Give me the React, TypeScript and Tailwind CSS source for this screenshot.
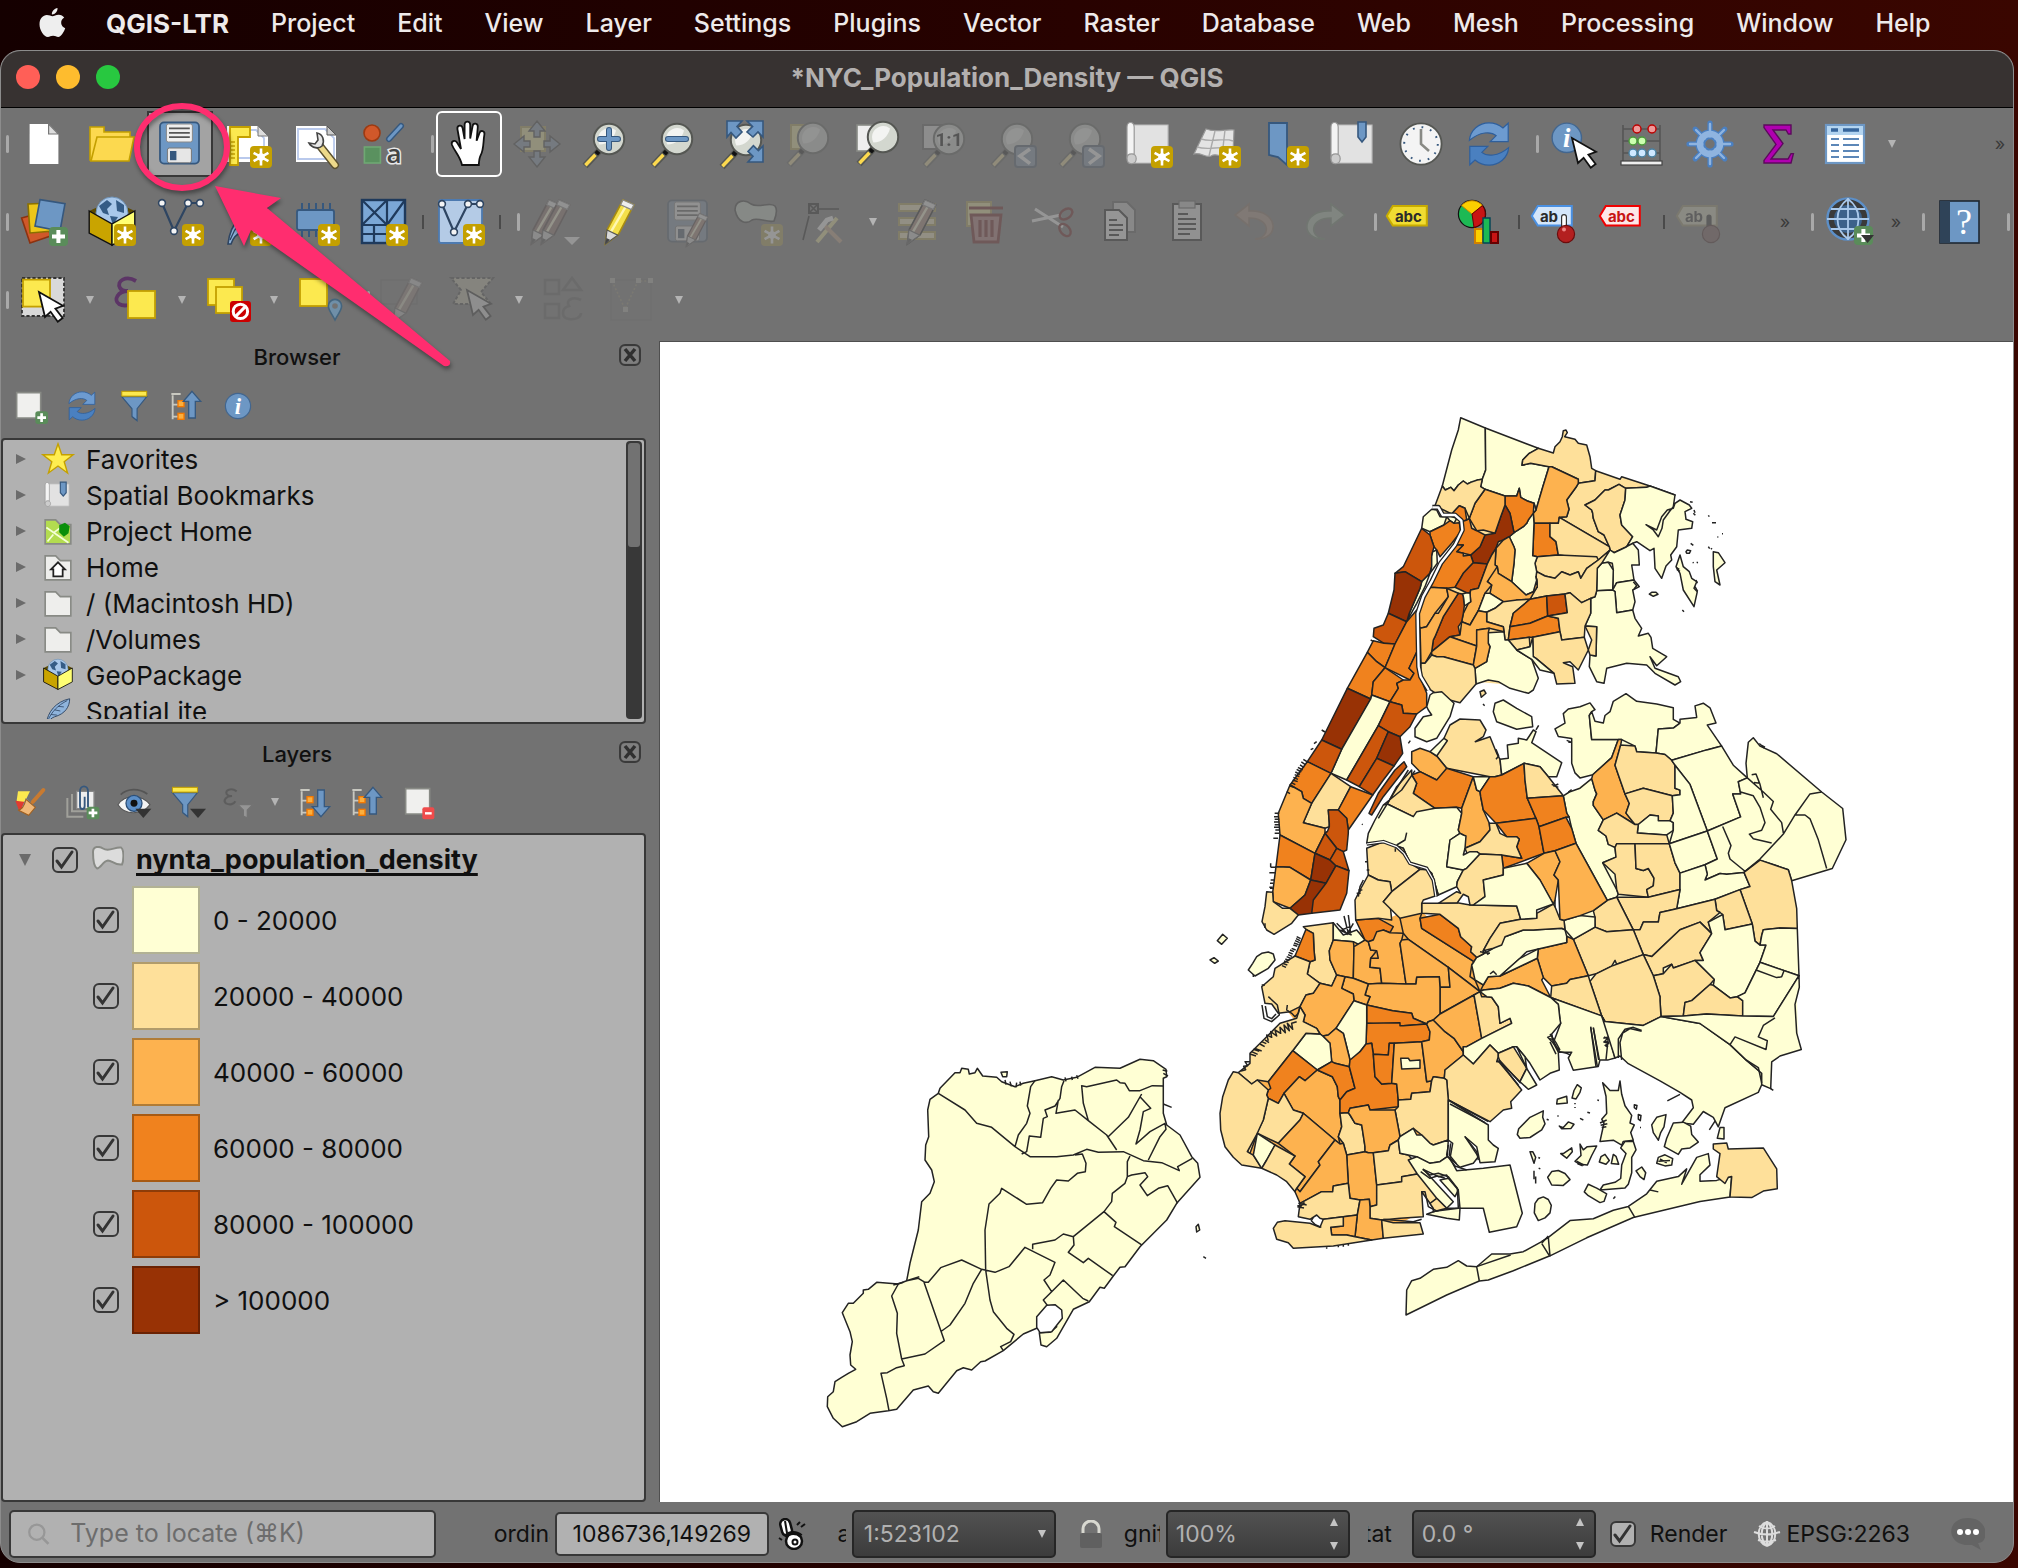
import React from "react";

type Kids = { children?: React.ReactNode };

/* ---------- shared icon pieces ---------- */

function Ico({ children, dim, size = "lg" }: Kids & { dim?: boolean; size?: "lg" | "sm" }) {
  return (
    <svg
      viewBox="0 0 24 24"
      aria-hidden="true"
      className={(size === "lg" ? "h-12 w-12" : "h-8 w-8") + " shrink-0 overflow-visible" + (dim ? " opacity-25 saturate-50" : "")}
      fill="none"
    >
      {children}
    </svg>
  );
}

const Star = () => (
  <g>
    <rect x="13" y="13" width="11" height="11" rx="2" fill="#c4a000" />
    <path d="M18.500 14.200v8.600M14.800 16.400l7.400 4.200M22.200 16.400l-7.400 4.200" stroke="#fff" strokeWidth="1.300" />
    <circle cx="18.500" cy="18.500" r="1.900" fill="#fff" />
  </g>
);

const PlusBadge = () => (
  <g>
    <rect x="14.500" y="14.500" width="9.500" height="9.500" rx="2" fill="#5a8c5a" />
    <path d="M19.200 16v6.500M16 19.200h6.500" stroke="#fff" strokeWidth="2" />
  </g>
);

const Glass = ({ x = 14, y = 9.5 }: { x?: number; y?: number }) => (
  <g transform={`translate(${x - 14} ${y - 9.5})`}>
    <path d="M9 15.500L2 23" stroke="#555753" strokeWidth="3.400" />
    <path d="M7.200 17.400L2.200 22.600" stroke="#fcd94f" strokeWidth="1.700" />
    <path d="M9.400 15L7.600 17" stroke="#111" strokeWidth="2.400" />
    <circle cx="14" cy="9.500" r="7.600" fill="#d3d7cf" stroke="#555753" strokeWidth="1" />
    <path d="M8.500 9.500a5.600 5.600 0 0 1 9-4.300c-1 4-4 7-8.300 7a6 6 0 0 1-.7-2.700z" fill="#f3f4f2" />
  </g>
);

const Cursor = ({ x = 12, y = 9 }: { x?: number; y?: number }) => (
  <path
    transform={`translate(${x} ${y})`}
    d="M0 0l3 12.500 2.800-2.600 3.600 5 2.400-1.900-3.600-4.700 3.800-1.400z"
    fill="#fff"
    stroke="#111"
    strokeWidth="0.900"
  />
);

const Pencil = ({ body = "#f4e04a", edge = "#a88c10" }: { body?: string; edge?: string }) => (
  <g>
    <path d="M15 1l5.400 2.400-7.800 15L6.200 23l.8-7z" fill={body} stroke={edge} strokeWidth="0.800" />
    <path d="M17 3.200L8.600 17.600" stroke="#fff7b0" strokeWidth="1.200" />
    <path d="M15 1l5.400 2.400-1.200 2.400-5.400-2.400z" fill="#eee" stroke="#888" strokeWidth="0.600" />
    <path d="M7 16l5.400 2.600L6.200 23z" fill="#d8d8d8" stroke="#555" strokeWidth="0.600" />
    <path d="M6.700 20l1.800.9L6.200 23z" fill="#444" />
  </g>
);

const Floppy = () => (
  <g>
    <rect x="2" y="1.200" width="19.500" height="20.600" rx="2" fill="#6d97c4" stroke="#36587e" strokeWidth="0.900" />
    <rect x="5.200" y="2" width="13" height="9" rx="1" fill="#eee" stroke="#888" strokeWidth="0.500" />
    <path d="M6.500 4.200h10.400M6.500 6.400h10.400M6.500 8.600h10.400" stroke="#555" strokeWidth="0.900" />
    <rect x="5.700" y="14" width="12" height="7.400" rx="1" fill="#e6e6e6" stroke="#777" strokeWidth="0.500" />
    <rect x="7" y="15.500" width="3.200" height="4.600" fill="#36587e" />
  </g>
);

const Refresh = () => (
  <g stroke="#2f5f9c" strokeWidth="0.600">
    <path d="M2.200 10.200C2.600 5 7 1.400 12 1.400c2.800 0 5 .9 7 2.600l2.600-2.400v9.200h-9l3-3C13 5.600 7.500 5.700 2.200 10.200z" fill="#6d9bd0" />
    <path d="M21.800 13.800C21.400 19 17 22.600 12 22.600c-2.800 0-5-.9-7-2.600l-2.600 2.400v-9.200h9l-3 3c2.600 2.200 8.100 2.100 13.400-2.400z" fill="#4a80c0" />
  </g>
);

const Scroll = () => (
  <g>
    <path d="M4 2.500h17.500v19H4z" fill="#e2e2e2" stroke="#bbb" strokeWidth="0.600" />
    <path d="M1 3.500c0-3 3.400-3 3.600 0v13.600H3c-1.300 0-2 1-2 2.200z" fill="#f4f4f4" stroke="#999" strokeWidth="0.600" />
    <path d="M1 19.400c.1 3.400 4.600 3.200 4.600 0 0-1.400-.9-2.400-2.300-2.400S1 18 1 19.400z" fill="#ccc" stroke="#999" strokeWidth="0.600" />
  </g>
);

const Globe = () => (
  <g>
    <circle cx="12" cy="7.500" r="8" fill="#a9c8ea" stroke="#6f93b8" strokeWidth="0.500" />
    <path d="M5.500 4l4-3 2.500 2-2.500 2.500 1 3-3-1zM14 1l4 2.500v4l-3.500-1zM11 9l4 .5-2.500 4z" fill="#355c86" />
  </g>
);

const Box = () => (
  <g>
    <path d="M.6 6.500L6 4v7z" fill="#5c4a00" />
    <path d="M23.400 6.500L18 4v7z" fill="#5c4a00" />
    <Globe />
    <path d="M.6 6.500L12 13v10.500L.6 17.500z" fill="#c9a400" stroke="#111" strokeWidth="0.700" />
    <path d="M23.400 6.500L12 13v10.500l11.400-6z" fill="#ffff73" stroke="#111" strokeWidth="0.700" />
  </g>
);

const VLine = () => (
  <g>
    <path d="M3 2.500L9 16.500 16 2.500h6" stroke="#2e4562" strokeWidth="1.100" />
    {[[3, 2.5], [9, 16.5], [16, 2.5], [22, 2.5]].map(([a, b]) => (
      <circle key={a} cx={a} cy={b} r="1.700" fill="#f4f4f4" stroke="#2e4562" strokeWidth="0.800" />
    ))}
  </g>
);

const Sq = ({ x, y, s = 13.5 }: { x: number; y: number; s?: number }) => (
  <rect x={x} y={y} width={s} height={s} fill="#fce94f" stroke="#c4a000" strokeWidth="0.900" />
);

const Tag = ({ fill, edge, word, ink = "#2b2b2b" }: { fill: string; edge: string; word: string; ink?: string }) => (
  <g>
    <path d="M-.6 9L2.400 4h17v9.800h-17z" fill={fill} stroke={edge} strokeWidth="1" />
    <text x={word === "ab" ? 8 : 10.2} y="11.800" textAnchor="middle" fontFamily="Inter, sans-serif" fontWeight="700" fontSize="7.500" fill={ink}>
      {word}
    </text>
  </g>
);

const Feather = () => (
  <g>
    <path d="M2 23C3 13 10 4 22 1.500c0 7-4 13-13 15.500-3 1-4.500 3-5.500 6z" fill="#8fb4dc" stroke="#2e4562" strokeWidth="0.800" />
    <path d="M3 21C6 13 12 7 20 3M9 11l5 1M12 8l5 .5M6 15l5 .5" stroke="#2e4562" strokeWidth="0.700" />
  </g>
);

const Funnel = () => (
  <g>
    <path d="M1 5h22l-8.500 9v9L10 20v-6z" fill="#6d97c4" stroke="#36587e" strokeWidth="1" />
    <rect x="1" y="1" width="22" height="3.600" fill="#fce94f" stroke="#c4a000" strokeWidth="0.800" />
  </g>
);

const TreeArrow = ({ up }: { up?: boolean }) => (
  <g>
    <path d="M1 3h7M2 4v18M2 11h5M2 20h5" stroke="#c8c8c0" strokeWidth="1.400" />
    <rect x="6" y="8" width="4.500" height="4.500" fill="#fcaf3e" stroke="#f57900" />
    <rect x="6" y="17.500" width="4.500" height="4.500" fill="#fcaf3e" stroke="#f57900" />
    <path
      d={up ? "M16.500 1l6.500 7.500h-4V21h-5V8.500h-4z" : "M16.500 23l6.500-7.500h-4V3h-5v12.500h-4z"}
      fill="#6d97c4"
      stroke="#36587e"
      strokeWidth="1"
    />
  </g>
);

const Info = () => (
  <g>
    <circle cx="12" cy="12" r="10.500" fill="#6d97c4" stroke="#42668f" strokeWidth="1" />
    <text x="12" y="18.500" textAnchor="middle" fontFamily="Liberation Serif, serif" fontStyle="italic" fontWeight="700" fontSize="19" fill="#fff">
      i
    </text>
  </g>
);

const SheetIcon = ({ children }: Kids) => (
  <g>
    <path d="M2 2h18v19H2z" fill="#f0f0ee" stroke="#888a85" strokeWidth="1.200" />
    {children}
  </g>
);

const FolderShape = ({ fill = "#eeeeec" }: { fill?: string }) => (
  <path d="M1 2.500h9l4 4h9V23H1z" fill={fill} stroke="#888a85" strokeWidth="1.400" />
);

/* ---------- toolbar parts ---------- */

function Tool({ label, children, state }: Kids & { label: string; state?: "save" | "active" }) {
  const skin =
    state === "save"
      ? " border-2 border-[#383838] bg-[#a3a3a3]"
      : state === "active"
        ? " rounded-md border-2 border-white"
        : "";
  return (
    <span className="flex h-[68px] w-[68px] shrink-0 items-center justify-center">
      <button type="button" aria-label={label} className={"flex h-[66px] w-[66px] items-center justify-center" + skin}>
        {children}
      </button>
    </span>
  );
}

const Handle = ({ first }: { first?: boolean }) => (
  <span className={"flex h-[68px] shrink-0 items-center justify-end pr-px " + (first ? "w-[9px]" : "w-[17px]")}>
    <span className="h-[18px] w-[3px] rounded-sm bg-[#a9a9a9]" />
  </span>
);

const Sep = () => (
  <span className="flex h-[68px] w-[9px] shrink-0 items-center justify-center">
    <span className="h-[14px] w-[2px] bg-[#4a4a4a]" />
  </span>
);

const Caret = () => (
  <button type="button" aria-label="More options" className="flex h-[68px] w-6 shrink-0 items-center justify-center">
    <svg viewBox="0 0 8 8" className="h-2 w-2" aria-hidden="true">
      <path d="M0 0h8L4 8z" fill="#b4b4b4" />
    </svg>
  </button>
);

const More = () => (
  <button type="button" aria-label="More tools" className="flex h-[68px] w-[26px] shrink-0 items-center justify-center text-lg text-[#3a3a3a]">
    »
  </button>
);

const MENUS = ["Project", "Edit", "View", "Layer", "Settings", "Plugins", "Vector", "Raster", "Database", "Web", "Mesh", "Processing", "Window", "Help"];

function MenuBar() {
  return (
    <nav className="flex h-[50px] items-center gap-[42px] pb-[3px] pl-[38px] text-[25px] font-medium whitespace-nowrap text-[#eeeaea]">
      <button type="button" aria-label="Apple menu" className="h-8 w-[26px]">
        <svg viewBox="0 0 27 32" className="h-8 w-[28px]" aria-hidden="true">
          <path
            d="M14 8.200c1.600 0 3.400-1.500 6.200-1.500 2.300.1 4.300 1.200 5.500 2.900-4.500 2.600-3.800 8.900 1 10.700-1 3-4 8.700-6.900 8.700-2 0-2.700-1.200-5.200-1.200s-3.400 1.200-5.200 1.200C5.300 29 1 22 1 16.200 1 10.500 4.600 7 8.300 7c2.500 0 4.300 1.200 5.700 1.200zM19 0c.3 3.500-2.600 6.700-5.600 6.500C13 3.500 15.900.3 19 0z"
            fill="#eee"
          />
        </svg>
      </button>
      <button type="button" className="text-[26px] font-bold">QGIS-LTR</button>
      {MENUS.map((m) => (
        <button type="button" key={m}>{m}</button>
      ))}
    </nav>
  );
}

function TitleBar() {
  return (
    <header className="grid h-[57px] grid-cols-[1fr_auto_1fr] items-center rounded-t-[20px] border-b border-black bg-[#373231] px-[15px] pb-1">
      <div className="flex gap-4">
        <button type="button" aria-label="Close" className="h-6 w-6 rounded-full bg-[#ff5f57]" />
        <button type="button" aria-label="Minimize" className="h-6 w-6 rounded-full bg-[#febc2e]" />
        <button type="button" aria-label="Zoom" className="h-6 w-6 rounded-full bg-[#28c840]" />
      </div>
      <h1 className="text-[26px] font-bold text-[#b3b0af]">*NYC_Population_Density — QGIS</h1>
    </header>
  );
}

function Toolbars() {
  return (
    <div className="overflow-hidden">
      <div className="flex h-[75px] items-center pb-1">
        <Handle first />
        <Tool label="New project"><Ico><path d="M4.800 2h9.500l4.900 5v15H4.800z" fill="#fff" /><path d="M14.300 2v5h4.900z" fill="#ddd" stroke="#777" strokeWidth="0.600" /></Ico></Tool>
        <Tool label="Open project">
          <Ico>
            <path d="M1 3.500h7v2.500h13v4H6L3.500 20H1z" fill="#fcd94f" stroke="#c4a000" strokeWidth="0.800" />
            <path d="M4.500 8.500H23L20.500 20.500h-19z" fill="#fcd94f" stroke="#c4a000" strokeWidth="0.800" />
          </Ico>
        </Tool>
        <Tool label="Save project" state="save"><Ico><Floppy /></Ico></Tool>
        <Tool label="New print layout">
          <Ico>
            <path d="M1.500 3H17l5 5v13H1.500z" fill="#fff" /><path d="M4 5h12l4 4v10H4z" stroke="#b9c9ec" strokeWidth="0.900" />
            <path d="M17 3v5h5z" fill="#ddd" stroke="#777" strokeWidth="0.500" />
            <path d="M3 3.500h10v5H7v14H3z" fill="#fce94f" stroke="#c4a000" strokeWidth="0.900" />
            <path d="M3.500 11h2M3.500 13h2M3.500 15h2M3.500 17h2M3.500 19h2" stroke="#c4a000" strokeWidth="0.800" />
            <Star />
          </Ico>
        </Tool>
        <Tool label="Layout manager">
          <Ico>
            <path d="M2 3h15.500L22 7.500V21H2z" fill="#fff" /><path d="M3 4.500h13.500L21 9v10.500H3z" stroke="#b9c9ec" strokeWidth="0.900" />
            <path d="M17.500 3v4.500H22z" fill="#ccc" stroke="#555" strokeWidth="0.500" />
            <path d="M14 13l7.500 9.500" stroke="#5a5030" strokeWidth="4" strokeLinecap="round" />
            <path d="M14 13l7.500 9.500" stroke="#edd98a" strokeWidth="2.600" strokeLinecap="round" />
            <path d="M12.500 6.500c3 .5 4 4 2.500 6.500-1.500 1.500-5 1.200-6.500-1.500l3 .5 1.500-2z" fill="#e8e8e8" stroke="#444" strokeWidth="0.800" />
          </Ico>
        </Tool>
        <Tool label="Style manager">
          <Ico>
            <circle cx="6" cy="6.500" r="4" fill="#d0582a" stroke="#9c3a12" strokeWidth="0.800" />
            <path d="M14.500 9.500L20.500 3" stroke="#36587e" strokeWidth="3" strokeLinecap="round" /><path d="M14.500 9.500L20.500 3" stroke="#6d97c4" strokeWidth="1.600" strokeLinecap="round" />
            <rect x="2.200" y="13.500" width="8" height="8" fill="#5a915f" stroke="#6fa873" strokeWidth="0.800" />
            <text x="17" y="21.500" textAnchor="middle" fontFamily="Open Sans, sans-serif" fontWeight="600" fontSize="13" fill="#444" stroke="#e8e8e8" strokeWidth="1.500" paintOrder="stroke">a</text>
          </Ico>
        </Tool>
        <Handle />
        <Tool label="Pan map" state="active">
          <Ico>
            <path
              d="M8.500 22.500C7.500 18 5 16 3.500 12.500 2.800 10.500 5 9.700 6 11.300L8 14.500 6.200 4.500C6 2.600 8.400 2.200 8.800 4l1 5.500V2.300c0-2 2.700-2 2.800 0v7L13.800 3c.3-1.800 2.700-1.400 2.600.4l-.6 7 1.500-4c.6-1.600 2.700-.9 2.400.8-.7 4-.2 7.500-1.900 10.500-.7 1.300-.8 3-.9 4.800z"
              fill="#fff" stroke="#111" strokeWidth="0.900"
            />
          </Ico>
        </Tool>
        <Tool label="Pan map to selection">
          <Ico dim><rect x="4" y="3.500" width="12" height="12" fill="#fce94f" stroke="#c4a000" /><path d="M12 .5l4 5h-2.500v3h-3v-3H8zM12 23.500l4-5h-2.500v-3h-3v3H8zM.5 12l5-4v2.500h3v3h-3V16zM23.500 12l-5-4v2.500h-3v3h3V16z" fill="#6d97c4" stroke="#333" strokeWidth="0.700" /></Ico>
        </Tool>
        <Tool label="Zoom in"><Ico><Glass /><path d="M14 5v9M9.500 9.500h9" stroke="#36587e" strokeWidth="3" strokeLinecap="round" /><path d="M14 5v9M9.500 9.500h9" stroke="#6d97c4" strokeWidth="2" strokeLinecap="round" /></Ico></Tool>
        <Tool label="Zoom out"><Ico><Glass /><path d="M9.500 9.500h9" stroke="#36587e" strokeWidth="3" strokeLinecap="round" /><path d="M9.500 9.500h9" stroke="#6d97c4" strokeWidth="2" strokeLinecap="round" /></Ico></Tool>
        <Tool label="Zoom full">
          <Ico><Glass x={14.5} y={10} /><path d="M5 .5h7.500L10 3.200 12.500 6l-3 3L7 6.200 5 8.500zM23 .5v8L20.500 6 18 8.500 15 6l2.800-2.800L15 .5zM23 21v-8l-2.300 2.300-2.500-2.500-2.700 2.900 2.500 2.500L15.500 21z" fill="#6d97c4" stroke="#36587e" strokeWidth="0.800" /></Ico>
        </Tool>
        <Tool label="Zoom to selection"><Ico dim><rect x="3" y="2.500" width="11" height="12" fill="#fce94f" stroke="#c4a000" /><Glass y={9} /></Ico></Tool>
        <Tool label="Zoom to layer"><Ico><rect x="2" y="2.500" width="11" height="13" fill="#eee" stroke="#888a85" strokeWidth="0.800" /><Glass x={15} y={8.5} /></Ico></Tool>
        <Tool label="Zoom to native resolution">
          <Ico dim><rect x="1" y="2.500" width="11" height="12" fill="#ddd" stroke="#555" /><Glass /><text x="14" y="13" textAnchor="middle" fontFamily="Roboto, sans-serif" fontWeight="700" fontSize="9.500" fill="#000">1:1</text></Ico>
        </Tool>
        <Tool label="Zoom last"><Ico dim><Glass /><rect x="13" y="13" width="10.500" height="10.500" rx="1.500" fill="#6d97c4" stroke="#36587e" /><path d="M20.500 14.500L15.500 18l5 3.800" stroke="#fff" strokeWidth="1.800" /></Ico></Tool>
        <Tool label="Zoom next"><Ico dim><Glass /><rect x="13" y="13" width="10.500" height="10.500" rx="1.500" fill="#6d97c4" stroke="#36587e" /><path d="M16 14.500L21 18l-5 3.800" stroke="#fff" strokeWidth="1.800" /></Ico></Tool>
        <Tool label="New map view"><Ico><Scroll /><Star /></Ico></Tool>
        <Tool label="New 3D map view">
          <Ico><path d="M.5 17L6.500 4.500c5 2 9 0 14 .5l-.5 12c-5 3-8-1-11 1-3 1-5-2-8.500-1z" fill="#e4e4e4" stroke="#999" strokeWidth="0.600" /><path d="M4 9.500c6 2 11-1 16 1M2 13.500c6 2 12-1 18 1M11 5.500L8 18M16 5L14.500 18" stroke="#aaa" strokeWidth="0.700" /><Star /></Ico>
        </Tool>
        <Tool label="New bookmark"><Ico><path d="M4 1.500h9v21l-4.500-4L4 17.500z" fill="#6d97c4" stroke="#36587e" strokeWidth="0.900" /><Star /></Ico></Tool>
        <Tool label="Show bookmarks"><Ico><Scroll /><path d="M14.500 1h4v7.500l-2 2.500-2-2.500z" fill="#6d97c4" stroke="#36587e" strokeWidth="0.800" /></Ico></Tool>
        <Tool label="Temporal controller">
          <Ico><circle cx="12" cy="12" r="10.300" fill="#f4f4f4" stroke="#555753" strokeWidth="0.900" /><circle cx="12" cy="12" r="8.400" stroke="#36587e" strokeWidth="1" strokeDasharray="0.900 3.500" /><path d="M12 4.500V12l4 3.500" stroke="#888a85" strokeWidth="1.300" /></Ico>
        </Tool>
        <Tool label="Refresh"><Ico><Refresh /></Ico></Tool>
        <Handle />
        <Tool label="Identify features"><Ico><g transform="translate(0 .5) scale(.7)"><Info /></g><Cursor x={11} y={9} /></Ico></Tool>
        <Tool label="Open field calculator">
          <Ico>
            <path d="M2.500 2.500V21M21 2.500V21M2.500 4.500H21M2.500 10.500H21M2.500 16.500H21" stroke="#555" strokeWidth="0.800" />
            {[[9.5, 4.5, "#ef9a9a", "#b00"], [17, 4.5, "#ef9a9a", "#b00"], [7.5, 10.5, "#ccffb0", "#4a9a3a"], [12, 10.5, "#ccffb0", "#4a9a3a"], [7.5, 16.5, "#cfe8ff", "#4a80a0"], [12, 16.5, "#cfe8ff", "#4a80a0"], [17, 16.5, "#cfe8ff", "#4a80a0"]].map(([a, b, f, s]) => (
              <circle key={`${a}-${b}`} cx={a} cy={b} r="2" fill={f as string} stroke={s as string} strokeWidth="0.700" />
            ))}
            <rect x="1.500" y="20.500" width="20.500" height="2" fill="#eee" stroke="#444" strokeWidth="0.600" />
          </Ico>
        </Tool>
        <Tool label="Toolbox">
          <Ico>
            <circle cx="12" cy="12" r="5" stroke="#4a7fc0" strokeWidth="4.600" /><path d="M12 1.500v21M1.500 12h21M4.600 4.600l14.800 14.800M19.400 4.600L4.600 19.400" stroke="#4a7fc0" strokeWidth="2.600" strokeLinecap="round" />
            <path d="M12 2v20M2 12h20M5 5l14 14M19 5L5 19" stroke="#8fb4e0" strokeWidth="1.200" strokeLinecap="round" /><circle cx="12" cy="12" r="5" stroke="#8fb4e0" strokeWidth="3.200" /><circle cx="12" cy="12" r="2.800" fill="#727272" stroke="#4a7fc0" strokeWidth="0.900" />
          </Ico>
        </Tool>
        <Tool label="Statistical summary"><Ico><path d="M5 2.500h13.500v4.500h-1.300L16 5H9.500l5 6.800-6 7.700H17l1.500-2.700h1.200L18.500 21.500H5v-1.300l6-8-6-8.400z" fill="#b000b0" stroke="#5c0a5c" strokeWidth="0.700" /></Ico></Tool>
        <Tool label="Open attribute table">
          <Ico><rect x="2" y="2.500" width="19" height="19" fill="#fff" stroke="#6d97c4" strokeWidth="1.100" /><rect x="2.500" y="3" width="18" height="4.500" fill="#b3d4f0" /><path d="M4.500 5h3.500M10.500 5h8" stroke="#36659c" strokeWidth="1.800" /><path d="M4.500 9.500h4M10.500 9.500h8M4.500 12.500h4M10.500 12.500h8M4.500 15.500h4M10.500 15.500h8M4.500 18.500h4M10.500 18.500h8" stroke="#5c87b8" strokeWidth="1.100" /></Ico>
        </Tool>
        <Caret />
        <span className="flex flex-1 justify-end"><More /></span>
      </div>

      <div className="flex h-[78px] items-center">
        <Handle first />
        <Tool label="Data source manager">
          <Ico><path d="M.8 10l11-3 3.500 12L5 22.500z" fill="#d0582a" stroke="#8c3210" strokeWidth="0.800" /><path d="M4 3l11.500-.5 1 14L5 17.500z" fill="#edc61a" stroke="#8a7000" strokeWidth="0.800" /><path d="M10 .8l12.500 2L20 16.500 7.500 14z" fill="#6d97c4" stroke="#36587e" strokeWidth="0.800" /><PlusBadge /></Ico>
        </Tool>
        <Tool label="New GeoPackage layer"><Ico><Box /><Star /></Ico></Tool>
        <Tool label="New shapefile layer"><Ico><VLine /><Star /></Ico></Tool>
        <Tool label="New SpatiaLite layer"><Ico><Feather /><Star /></Ico></Tool>
        <Tool label="New temporary scratch layer">
          <Ico><path d="M5 2.500v17M8.500 2.500v17M12 2.500v17M15.500 2.500v17M19 2.500v17" stroke="#36587e" strokeWidth="1" /><rect x="2.500" y="6" width="18.500" height="10" rx="1" fill="#6d97c4" stroke="#36587e" strokeWidth="0.900" /><Star /></Ico>
        </Tool>
        <Tool label="New mesh layer">
          <Ico><rect x="1" y="1" width="21.500" height="21.500" fill="#7ba7d6" stroke="#1f3a5c" strokeWidth="1.200" /><path d="M1 13.500h21.500M13.500 1v12.500M1 1l12.500 12.500M13.500 1L1 13.500M13.500 13.500L22.500 1M7 13.500v9M13.500 13.500v9M1 18h12.500" stroke="#1f3a5c" strokeWidth="1.100" /><Star /></Ico>
        </Tool>
        <Sep />
        <Tool label="New virtual layer"><Ico><rect x="1" y="1" width="21.500" height="21.500" rx="1" fill="#b4cbe6" stroke="#4d7ab0" strokeWidth="0.900" /><g transform="translate(-.5 .5)"><VLine /></g><Star /></Ico></Tool>
        <Sep />
        <Handle />
        <Tool label="Current edits"><Ico dim><g transform="translate(-6 0)"><Pencil body="#a06a5a" edge="#533" /></g><g transform="translate(-1 0)"><Pencil body="#a06a5a" edge="#533" /></g><path d="M16.500 19.500h8l-4 4z" fill="#fff" /></Ico></Tool>
        <Tool label="Toggle editing"><Ico><g transform="translate(-3 0)"><Pencil /></g></Ico></Tool>
        <Tool label="Save layer edits"><Ico dim><g transform="translate(-1.500 0)"><Floppy /></g><g transform="translate(5 7) scale(.75)"><Pencil body="#c07a5a" edge="#533" /></g></Ico></Tool>
        <Tool label="Add polygon feature"><Ico dim><path d="M0 6c0-5 5-5.500 8-3 4 2.500 9-1.500 12 1 1.500 2 .5 5-.5 7.500-3 1-8-2-11-.5-2.500 2-7 2-8.500-5z" fill="#b9d0b9" stroke="#333" strokeWidth="0.800" /><Star /></Ico></Tool>
        <Tool label="Vertex tool"><Ico dim><rect x="3" y="3" width="4.500" height="4.500" stroke="#111" /><path d="M3 3l4.500 4.500M7.500 3L3 7.500M8 5.500h10M3 9L0 21" stroke="#111" strokeWidth="0.800" /><path d="M17 10L7 22" stroke="#fce94f" strokeWidth="2" /><path d="M10 13l9 9" stroke="#e0a060" strokeWidth="2" /><path d="M8 16l4-5 3-1" stroke="#fff" strokeWidth="2.400" /></Ico></Tool>
        <Caret />
        <Tool label="Modify attributes"><Ico dim><path d="M2 3h18v3.500H2zM2 10h18v3.500H2zM2 17h18v3.500H2z" fill="#fce98f" stroke="#c4a000" /><Pencil body="#c07a5a" edge="#111" /></Ico></Tool>
        <Tool label="Delete selected"><Ico dim><rect x="2" y="2" width="12" height="12" fill="#fce94f" stroke="#c4a000" /><path d="M4 8.500h15L17.500 22h-12z" fill="#d66" stroke="#a00" strokeWidth="1.400" /><path d="M3 5h17M8.500 11v8.500M11.500 11v8.500M14.500 11v8.500" stroke="#a00" strokeWidth="1.600" /></Ico></Tool>
        <Tool label="Cut features"><Ico dim><path d="M2 5.500l14 9M.5 11.500L15 8.500" stroke="#fff" strokeWidth="1.500" /><ellipse cx="17.500" cy="8" rx="3.500" ry="2.300" transform="rotate(-35 17.500 8)" stroke="#a00" strokeWidth="1.200" /><ellipse cx="17" cy="16" rx="3.500" ry="2.300" transform="rotate(50 17 16)" stroke="#a00" strokeWidth="1.200" /></Ico></Tool>
        <Tool label="Copy features"><Ico dim><path d="M7 2h7l4 4v11H7z" fill="#ccc" stroke="#555" /><path d="M3 6h7l4 4v11H3z" fill="#fff" stroke="#111" /><path d="M5 11h4M5 13.500h7M5 16h7M5 18.500h5" stroke="#111" /></Ico></Tool>
        <Tool label="Paste features"><Ico dim><rect x="3" y="3" width="14" height="18" fill="#eee" stroke="#111" /><rect x="6" y="1.500" width="8" height="3.500" fill="#ccc" stroke="#555" strokeWidth="0.600" /><path d="M5.500 8h5M5.500 10.500h9M5.500 13h9M5.500 15.500h9M5.500 18h6" stroke="#111" /></Ico></Tool>
        <Tool label="Undo"><Ico dim><path d="M10 20.500c8-.5 8-10.500-3-10.500V14L0 8.500 7 3v3.500c15-1 16 15 3 14z" fill="#c08a68" stroke="#9a6848" strokeWidth="0.800" /></Ico></Tool>
        <Tool label="Redo"><Ico dim><path d="M11 20.500c-8-.5-8-10.500 3-10.500V14l7-5.500L14 3v3.500c-15-1-16 15-3 14z" fill="#a0c4a0" stroke="#608860" strokeWidth="0.800" /></Ico></Tool>
        <Handle />
        <Tool label="Layer labeling options"><Ico><Tag fill="#f0dc32" edge="#c8ac00" word="abc" /></Ico></Tool>
        <Tool label="Layer diagram options">
          <Ico><circle cx="8" cy="8" r="6.800" fill="#1db954" stroke="#111" strokeWidth="0.600" /><path d="M8 8L2.800 3.800A6.800 6.800 0 0 1 13.200 3.800z" fill="#fcd000" stroke="#c88a00" strokeWidth="0.500" /><path d="M8 8l5.200-4.200A6.800 6.800 0 0 1 9 14.700z" fill="#c81414" stroke="#600" strokeWidth="0.500" /><path d="M9.500 15.500h4v7h-4z" fill="#fcd000" stroke="#d08000" /><path d="M13.500 10h3.500v12.500h-3.500z" fill="#1db954" stroke="#045" strokeWidth="0.700" /><path d="M17.500 17h3.500v5.500h-3.500z" fill="#c81414" stroke="#600" /></Ico>
        </Tool>
        <Sep />
        <Tool label="Pin labels"><Ico><Tag fill="#d4e6fa" edge="#4a90e2" word="ab" /><path d="M15.500 9.500v6" stroke="#333" strokeWidth="3" strokeLinecap="round" /><path d="M15.500 9.500v6" stroke="#fff" strokeWidth="1.800" strokeLinecap="round" /><circle cx="16.500" cy="18" r="4.300" fill="#b32020" stroke="#6b0d0d" strokeWidth="0.600" /><circle cx="15.500" cy="15.800" r="1" fill="#e88" /></Ico></Tool>
        <Tool label="Show unplaced labels"><Ico><Tag fill="#fde8e8" edge="#f00000" word="abc" ink="#c81414" /></Ico></Tool>
        <Sep />
        <Tool label="Move label"><Ico dim><Tag fill="#d8d49a" edge="#a09040" word="ab" /><path d="M15.500 9.500v6" stroke="#222" strokeWidth="2.600" strokeLinecap="round" /><circle cx="16.500" cy="18" r="4.300" fill="#8a4a4a" stroke="#511" strokeWidth="0.600" /></Ico></Tool>
        <span className="flex flex-1 justify-end"><More /></span>
        <Handle />
        <Tool label="Add web layer">
          <Ico><circle cx="11.500" cy="10.500" r="10.300" fill="#3a3a3a" stroke="#5c8fc8" strokeWidth="1.200" /><circle cx="11.500" cy="10.500" r="7" fill="#3d7cc0" opacity=".6" /><path d="M11.500 0v21M1 10.500h21M3 5.500h17M3 15.500h17M11.500.5c-7 5-7 15 0 20M11.500.5c7 5 7 15 0 20" stroke="#a9c8ea" strokeWidth="0.900" /><g transform="translate(0 -.5)"><PlusBadge /></g><path d="M18 18.500h6.500l-3.200 4z" fill="#333" /></Ico>
        </Tool>
        <More />
        <Handle />
        <Tool label="Help contents">
          <Ico><rect x="2" y="1.500" width="19.500" height="21" fill="#6d97c4" stroke="#1d2733" strokeWidth="0.800" /><path d="M2 1.500h5v21H2z" fill="#2f4358" /><text x="14" y="18" textAnchor="middle" fontFamily="Liberation Serif, serif" fontSize="18" fill="#fff">?</text></Ico>
        </Tool>
        <Handle />
        <span className="w-[2px]" />
      </div>

      <div className="flex h-[80px] items-center pb-[2px]">
        <Handle first />
        <Tool label="Select features"><Ico><rect x="1" y="1" width="21" height="19" fill="#d9d9d9" stroke="#333" strokeWidth="0.900" strokeDasharray="1.600 1" /><Sq x={1.5} y={1.8} /><Cursor x={9.5} y={8} /></Ico></Tool>
        <Caret />
        <Tool label="Select by expression"><Ico><path d="M12 2.500C7-.5 2 2.500 4 6c.7 1.200 2 1.700 4 1.500C3 7.500.5 12 3.500 14c3 1.600 7 .5 8-2.500" stroke="#5c3566" strokeWidth="1.900" /><g transform="translate(1 1)"><Sq x={7} y={6.5} /></g></Ico></Tool>
        <Caret />
        <Tool label="Deselect features"><Ico><g transform="translate(1 0)"><Sq x={1} y={1.5} s={13} /><Sq x={5} y={5.5} s={13} /><rect x="12" y="12.500" width="10.500" height="10.500" rx="1.500" fill="#cc0000" /><circle cx="17.200" cy="17.700" r="3.600" stroke="#fff" strokeWidth="1.500" /><path d="M14.800 20.200l4.900-4.900" stroke="#fff" strokeWidth="1.500" /></g></Ico></Tool>
        <Caret />
        <Tool label="Select by location"><Ico><Sq x={2} y={1.5} /><path d="M19.500 22c-1.500-3-3.300-4.800-3.300-7a3.300 3.300 0 0 1 6.600 0c0 2.200-1.800 4-3.300 7z" fill="#6f8fa8" stroke="#44657e" strokeWidth="0.800" /><circle cx="19.500" cy="15" r="1.400" fill="#727272" /></Ico></Tool>
        <Handle />
        <Tool label="Edit in place"><Ico dim><g opacity=".7"><rect x="0" y="2" width="18" height="12" stroke="#555" strokeWidth="0.500" /><Pencil body="#c0876a" edge="#644" /></g></Ico></Tool>
        <Tool label="Select by polygon"><Ico dim><g opacity=".8"><path d="M1 1h21l-6 7 5 6H2l4-7z" fill="#d8d090" stroke="#333" strokeDasharray="1.600 1" /><Cursor x={9} y={7} /></g></Ico></Tool>
        <Caret />
        <Tool label="Select by value"><Ico dim><g opacity=".4"><path d="M2 2h7v7H2zM2 14h7v7H2zM11 7l4.500-6L20 7zM20 12c-4-2-8 0-6 3-4 1-4 6 0 6.500 3 .4 6-.5 6-3" stroke="#333" strokeWidth="1.300" /></g></Ico></Tool>
        <Tool label="Digitize shape"><Ico dim><g opacity=".5"><rect x="1" y="2" width="20" height="20" stroke="#555" strokeWidth="0.500" /><path d="M1.500 2.500L8 16.500l6.500-14h6" stroke="#c8b040" strokeWidth="0.800" strokeDasharray="1 1" /><path d="M.5 1h2.500v2.500H.5zM7 15.500h2.500V18H7zM13.500 1H16v2.500h-2.500zM19.500 1H22v2.500h-2.500z" fill="#eec" /></g></Ico></Tool>
        <Caret />
      </div>
    </div>
  );
}

/* ---------- side panels ---------- */

function PanelTitle({ children }: Kids) {
  return (
    <div className="grid h-8 grid-cols-[1fr_auto_1fr] items-center pl-[8px] pr-[5px]">
      <h2 className="col-start-2 pr-14 text-[22px] font-medium">{children}</h2>
      <button type="button" aria-label={"Close " + children} className="mt-[3px] h-[22px] w-[22px] self-start justify-self-end">
        <svg viewBox="0 0 22 22" className="h-[22px] w-[22px]" aria-hidden="true">
          <rect x="1" y="1" width="20" height="20" rx="5" fill="none" stroke="#3a3a3a" strokeWidth="2" />
          <rect x="2.500" y="2.500" width="17" height="17" rx="4" fill="#7f7f7f" />
          <path d="M6 5l10 12M16 5L6 17" stroke="#303030" strokeWidth="3.500" />
        </svg>
      </button>
    </div>
  );
}

const SmallTool = ({ label, children }: Kids & { label: string }) => (
  <button type="button" aria-label={label} className="flex h-10 w-[52px] shrink-0 items-center justify-center">
    {children}
  </button>
);

const DownMark = () => <path d="M13 17h12l-6 7z" fill="#333" />;

const BROWSER: { name: string; icon: React.ReactNode; leaf?: boolean }[] = [
  { name: "Favorites", icon: <path d="M12-1l3.200 9.300H25l-7.700 6 2.900 9.700-8.200-6-8.200 6 2.900-9.700L-1 8.300h9.800z" fill="#ffee50" stroke="#c4a000" strokeWidth="1.200" /> },
  { name: "Spatial Bookmarks", icon: <g><Scroll /><path d="M14 1h5v9l-2.500 3L14 10z" fill="#6d97c4" stroke="#36587e" /></g> },
  { name: "Project Home", icon: <g><FolderShape fill="#b3dc4f" /><path d="M2 9l19 13M8 15l-5 6M9 13L17 7" stroke="#f4ffd8" strokeWidth="1.500" /><path d="M13 7l5-2 4 3-1 6-4 3-4-4z" fill="#0a8f0a" /></g> },
  { name: "Home", icon: <g><FolderShape /><path d="M6 14l6-6 6 6h-2v6H8v-6z" stroke="#222" strokeWidth="1.500" fill="#fff" /></g> },
  { name: "/ (Macintosh HD)", icon: <FolderShape /> },
  { name: "/Volumes", icon: <FolderShape /> },
  { name: "GeoPackage", icon: <g transform="translate(-1 -1) scale(1.080)"><Box /></g> },
  { name: "SpatiaLite", icon: <Feather />, leaf: true },
];

function Browser() {
  return (
    <section>
      <PanelTitle>Browser</PanelTitle>
      <div className="flex h-[65px] items-center pl-[3px]">
        <SmallTool label="Add selected layers"><Ico size="sm"><SheetIcon /><g transform="translate(1.500 1.500)"><PlusBadge /></g></Ico></SmallTool>
        <SmallTool label="Refresh browser"><Ico size="sm"><Refresh /></Ico></SmallTool>
        <SmallTool label="Filter browser"><Ico size="sm"><g transform="translate(2 0) scale(.85 1)"><Funnel /></g></Ico></SmallTool>
        <SmallTool label="Collapse all"><Ico size="sm"><TreeArrow up /></Ico></SmallTool>
        <SmallTool label="Properties"><Ico size="sm"><g transform="translate(1.200 1.200) scale(.9)"><Info /></g></Ico></SmallTool>
      </div>
      <div className="flex h-[286px] rounded-[4px] border-2 border-[#383838] bg-[#b1b1b1] px-[2px] pt-px pb-[3px]">
        <ul className="flex-1 overflow-hidden">
          {BROWSER.map((r) => (
            <li key={r.name} className="flex h-9 items-center text-[26px]">
              <span className="flex w-[31px] justify-center">
                {!r.leaf && (
                  <svg viewBox="0 0 10 10" className="h-[10px] w-[10px]" aria-hidden="true"><path d="M0 0l10 5-10 5z" fill="#6b6b6b" /></svg>
                )}
              </span>
              <span className="flex w-[50px] items-center justify-center pr-[6px]">
                <svg viewBox="0 0 24 24" className="h-7 w-7 overflow-visible" fill="none" aria-hidden="true">{r.icon}</svg>
              </span>
              {r.name}
            </li>
          ))}
        </ul>
        <div className="w-4 rounded-[4px] bg-[#383838] p-[2px]">
          <div className="h-[104px] rounded-[3px] bg-[#727272]" />
        </div>
      </div>
    </section>
  );
}

function Check({ label, id, light }: { label?: string; id: string; light?: boolean }) {
  return (
    <span className="grid h-[26px] w-[26px] shrink-0">
      <input
        id={id}
        type="checkbox"
        defaultChecked
        aria-label={label}
        className={"col-start-1 row-start-1 h-[26px] w-[26px] appearance-none rounded-[6px] border-2 border-[#383838] " + (light ? "bg-[#b1b1b1]" : "")}
      />
      <svg viewBox="0 0 26 26" className="pointer-events-none col-start-1 row-start-1 h-[26px] w-[26px]" fill="none" aria-hidden="true">
        <path d="M5 14l4.500 6L20 5" stroke="#333" strokeWidth="3" strokeLinecap="round" />
      </svg>
    </span>
  );
}

const LEGEND: [string, string][] = [
  ["0 - 20000", "#ffffd4"],
  ["20000 - 40000", "#fee09a"],
  ["40000 - 60000", "#fdb24f"],
  ["60000 - 80000", "#f0821e"],
  ["80000 - 100000", "#cc560c"],
  ["> 100000", "#983205"],
];

function Layers() {
  return (
    <section className="mt-[14px] flex flex-1 flex-col">
      <PanelTitle>Layers</PanelTitle>
      <div className="flex h-[63px] items-center pl-[3px]">
        <SmallTool label="Open layer styling"><Ico size="sm"><path d="M3 4l9 0-5 10-5-3z" fill="#fce94f" /><path d="M1 11l8 1 2 8-7-1z" fill="#e03c31" /><path d="M9 9l7 7-4 5-6-5z" fill="#6d97c4" /><path d="M22 3l-8 9" stroke="#c87a30" strokeWidth="3" strokeLinecap="round" /><path d="M9 10l7 6-5 6-8-4c3 0 5-4 6-8z" fill="#f0b878" stroke="#a06020" strokeWidth="0.800" /></Ico></SmallTool>
        <SmallTool label="Add group"><Ico size="sm"><path d="M1 9v14h12M4.500 6v13h12" stroke="#a0a09a" strokeWidth="1.500" /><path d="M8 4h13v13H8z" fill="#eee" stroke="#888" /><path d="M14 8v7c0 3-3.500 3-3.500 0V4c0-5 6-5 6 0v12" stroke="#36587e" strokeWidth="1.400" /><g transform="translate(1 1)"><PlusBadge /></g></Ico></SmallTool>
        <SmallTool label="Manage map themes"><Ico size="sm"><path d="M2 6.500C7 1.500 16 1.500 22 6" stroke="#555" strokeWidth="1.200" /><path d="M0 14c5-8 18-8 24 0-6 8-19 8-24 0z" fill="#f4f4f4" stroke="#555" strokeWidth="0.800" /><circle cx="12" cy="13" r="6" fill="#5c8fc8" stroke="#2c4f78" /><circle cx="12" cy="13" r="2.600" fill="#111" /><DownMark /></Ico></SmallTool>
        <SmallTool label="Filter legend"><Ico size="sm"><g transform="translate(1 0) scale(.85 1)"><Funnel /></g><g transform="translate(2 0)"><DownMark /></g></Ico></SmallTool>
        <SmallTool label="Filter by expression"><Ico size="sm" dim><path d="M11 4C7 1 2 3 3.500 6c.7 1.200 2 1.700 4 1.500C3 7.500.5 11 3 13c3 1.600 6 .5 7-1.500" stroke="#222" strokeWidth="1.600" /><path d="M12 14h11l-4 4v6l-3-1.500V18z" fill="#fff" stroke="#777" /></Ico></SmallTool>
        <span className="-ml-1 flex w-[29px] justify-center"><Caret /></span>
        <SmallTool label="Expand all"><Ico size="sm"><TreeArrow /></Ico></SmallTool>
        <SmallTool label="Collapse all layers"><Ico size="sm"><TreeArrow up /></Ico></SmallTool>
        <SmallTool label="Remove layer"><Ico size="sm"><SheetIcon><rect x="14.500" y="16" width="9" height="9" rx="1.500" fill="#ef4b4b" /><path d="M16.500 20.500h5" stroke="#fff" strokeWidth="1.800" /></SheetIcon></Ico></SmallTool>
      </div>
      <div className="flex-1 rounded-[4px] border-2 border-[#383838] bg-[#b1b1b1] pt-[3px]">
        <div className="flex h-11 items-center">
          <span className="flex w-[49px] justify-center pr-[6px]">
            <svg viewBox="0 0 12 12" className="h-3 w-3" aria-hidden="true"><path d="M0 0h12L6 12z" fill="#6b6b6b" /></svg>
          </span>
          <Check id="layer-root" />
          <svg viewBox="0 0 32 24" className="mb-1 ml-[14px] h-6 w-8" aria-hidden="true">
            <path d="M1 6C1 0 7 0 11 2.500c6 4 12-2 18-1 3 2 3 12 1 17-7 1-10-4-14-4C11 15 9 22 5 22.500 1 20 1 12 1 6z" fill="#dcdcdc" stroke="#888a85" strokeWidth="2" />
          </svg>
          <label htmlFor="layer-root" className="ml-3 text-[27px] font-bold underline decoration-[3px] underline-offset-4 [text-decoration-skip-ink:none]">
            nynta_population_density
          </label>
        </div>
        <ul>
          {LEGEND.map(([name, color], i) => (
            <li key={name} className="flex h-[76px] items-center pl-[90px]">
              <Check id={"class-" + i} />
              <span className="mx-[13px] h-[68px] w-[68px] border-2 border-black/30 bg-clip-border" style={{ backgroundColor: color }} />
              <label htmlFor={"class-" + i} className="text-[26px]">{name}</label>
            </li>
          ))}
        </ul>
      </div>
    </section>
  );
}

/* ---------- map ---------- */

const FILL = ["#ffffff", "#ffffd4", "#fee09a", "#fdb24f", "#f0821e", "#cc560c", "#983205"];

type Shape = [number, string];
type Pt = [number, number];
type Area = { c: number; pts: Pt[] };

const place = (shapes: Shape[], dx: number, dy: number, sx: number, sy: number): Area[] =>
  shapes.map(([c, s]) => ({
    c,
    pts: s.split(" ").map((p) => {
      const [x, y] = p.split(",").map(Number);
      return [dx + x * sx, dy + y * sy] as Pt;
    }),
  }));

/* Neighbouring areas share their borders: close corners are merged and
   corners that touch a neighbour's edge become part of that edge. */
function weld(areas: Area[], tol: number): Area[] {
  const known: Pt[] = [];
  const merged = areas.map(({ c, pts }) => {
    const out = pts.map((p) => {
      let best = p;
      let dist = tol;
      for (const k of known) {
        const d = Math.hypot(k[0] - p[0], k[1] - p[1]);
        if (d < dist) {
          dist = d;
          best = k;
        }
      }
      return best;
    });
    for (const p of out) if (!known.includes(p)) known.push(p);
    return { c, pts: out };
  });
  return merged.map(({ c, pts }) => {
    const own = new Set(pts);
    const out: Pt[] = [];
    pts.forEach((a, i) => {
      const b = pts[(i + 1) % pts.length];
      out.push(a);
      const dx = b[0] - a[0];
      const dy = b[1] - a[1];
      const len = Math.hypot(dx, dy);
      if (len < tol) return;
      const hits: [number, Pt][] = [];
      for (const k of known) {
        if (own.has(k)) continue;
        const t = ((k[0] - a[0]) * dx + (k[1] - a[1]) * dy) / (len * len);
        if (t <= 0.02 || t >= 0.98) continue;
        const off = Math.abs((k[0] - a[0]) * dy - (k[1] - a[1]) * dx) / len;
        if (off < tol) hits.push([t, k]);
      }
      hits.sort((m, n) => m[0] - n[0]).forEach(([, k]) => out.push(k));
    });
    return { c, pts: out };
  });
}

/* Ground colours under the neighbourhoods */
const BASE_NORTH: Shape[] = [
  [2, "565,310 577,258 632,60 865,145 1030,225 1200,275 1200,400 1140,432 1080,500 1080,640 1030,600 995,700 960,780 920,820 858,775 840,860 678,845 630,900 545,865 520,830 515,600 600,450"],
];
const BASE_EAST: Shape[] = [
  [1, "215,345 275,310 360,215 520,165 625,180 700,285 745,318 745,230 960,350 1020,390 1030,470 990,540 870,577 885,702 890,855 895,1010 815,1045 785,1090 690,1005 480,937 315,945 165,882 125,780 200,690 322,628"],
];
const BASE_SOUTH: Shape[] = [
  [3, "330,160 400,190 600,100 650,80 820,240 1040,350 845,475 735,570 735,780 600,820 650,882 655,1000 545,1065 400,1055 310,950 285,915 200,850 90,780 80,700 110,600 300,440 210,330"],
];

const BRONX: Shape[] = [
  [1, "632,53 706,84 707,210 697,238 682,240 672,256 662,247 652,252 640,243 625,255 612,272 602,262 586,270 577,258 605,150 625,90"],
  [1, "706,84 865,145 838,160 818,180 816,196 842,190 897,200 878,262 858,330 852,310 830,302 812,292 808,265 800,288 765,288 705,268 692,260 697,238 707,210"],
  [2, "865,145 910,159 915,140 930,125 937,110 940,92 948,90 952,98 944,110 975,118 985,130 1010,135 1020,170 1025,205 1037,212 1035,242 985,250 985,238 905,200 842,190 816,196 818,180 838,160"],
  [2, "1037,212 1110,238 1115,230 1200,258 1275,285 1190,262 1127,265 1107,253 1075,270 1035,300 1005,315 1025,330 1030,355 1045,395 1062,405 1078,440 928,352 950,350 957,328 950,300 978,262 985,250 1035,242"],
  [2, "1107,253 1127,265 1125,300 1110,345 1115,375 1148,410 1130,440 1092,458 1075,440 1052,398 1040,395 1028,340 1005,315 1035,300 1065,270"],
  [1, "1127,265 1190,262 1275,285 1270,320 1258,335 1240,360 1236,385 1225,410 1210,390 1188,374 1220,390 1235,350 1252,330 1270,325 1275,310 1290,300 1318,315 1325,325 1305,335 1308,358 1328,365 1325,385 1285,390 1280,440 1262,465 1265,480 1248,498 1235,535 1215,505 1212,445 1200,452 1160,425 1148,430 1130,440 1148,410 1115,375 1110,345 1125,300"],
  [1, "1080,450 1092,458 1130,440 1150,432 1165,450 1168,495 1145,495 1152,540 1100,548 1095,575 1087,490 1075,487 1055,490 1042,505 1045,480"],
  [1, "1045,500 1055,488 1080,487 1090,510 1088,570 1040,572"],
  [1, "1100,550 1150,537 1168,560 1148,570 1155,605 1148,630 1100,638 1095,575"],
  [1, "1022,595 1040,572 1088,570 1097,575 1098,638 1148,630 1155,655 1175,685 1165,708 1195,700 1203,712 1208,745 1250,770 1220,797 1200,770 1215,805 1285,830 1292,845 1275,855 1215,820 1190,795 1130,790 1070,805 1062,850 1040,845 1018,800 1020,765 1038,768 1040,680 1005,678 1022,640"],
  [2, "1007,678 1035,678 1040,765 1020,770 1025,720"],
  [3, "905,200 985,238 978,262 950,300 957,328 952,345 928,352 925,370 852,370 858,330 878,262"],
  [4, "852,370 900,370 900,410 918,425 925,465 848,467"],
  [2, "900,370 925,370 928,352 1078,440 1078,455 1040,475 925,465 918,425 900,410"],
  [2, "862,470 925,465 1040,470 1043,480 1010,505 992,535 985,515 960,525 935,515 915,535 885,528 860,515 855,490"],
  [2, "862,520 885,528 915,535 935,515 960,525 985,515 992,535 1015,500 1078,455 1042,510 1035,590 995,608 960,578 890,588 840,598 862,560"],
  [1, "852,310 850,340 845,467 862,470 855,490 860,540 850,575 828,585 785,545 792,490 792,440 778,410 830,370"],
  [4, "760,288 800,288 808,263 812,292 852,310 835,360 820,380 792,398 780,340 765,315"],
  [6, "768,318 780,340 790,395 745,425 738,445 725,465 712,492 670,488 662,465 690,440 705,405 735,400 752,350"],
  [3, "705,268 760,285 765,315 750,350 735,400 700,390 680,392 658,355 675,310"],
  [2, "577,258 586,270 602,262 612,272 640,243 652,252 697,238 692,260 705,268 675,310 658,355 645,325 628,317 605,342 555,317"],
  [4, "605,345 630,317 650,330 650,360 635,365"],
  [4, "638,365 662,360 665,385 705,400 690,440 662,465 640,460 620,455 640,435 615,435 635,400"],
  [4, "615,440 640,435 620,455 640,468 660,460 665,485 640,520 615,562 540,562 575,490"],
  [5, "665,485 712,490 685,565 650,578 612,565 640,520"],
  [3, "740,440 760,420 780,412 795,450 785,545 745,520 735,495"],
  [3, "712,545 735,500 745,518 785,545 828,585 850,572 858,530 862,560 845,598 800,600 788,612 720,580 725,555"],
  [3, "735,440 742,500 712,545 720,555 705,580 660,675 635,665 640,640 662,605 662,570 685,565 712,490"],
  [1, "705,575 760,605 710,637 685,632"],
  [1, "637,582 660,580 655,610 643,618"],
  [2, "705,640 735,625 760,605 800,600 835,598 790,640 780,680 775,720 765,720 760,680 710,665"],
  [4, "778,683 795,645 838,605 888,590 893,648 840,670"],
  [4, "775,718 778,683 840,670 893,648 925,655 930,695"],
  [5, "886,590 945,582 952,638 893,646"],
  [2, "945,582 960,578 995,608 1022,592 1022,640 1003,680 1003,712 935,720 925,655 893,648 952,638"],
  [2, "848,712 930,695 937,720 1003,712 1015,750 1000,780 985,810 960,785 940,788 968,800 975,850 920,852 912,820 858,775"],
  [2, "775,722 838,712 840,740 800,750"],
  [1, "715,698 762,695 765,720 775,718 800,755 845,778 865,835 850,870 835,880 780,865 745,845 715,840 678,852 675,805 712,775 720,740"],
  [1, "800,752 840,740 845,712 850,770 862,780 912,815 870,810 850,780"],
  [5, "625,580 640,590 640,640 625,680 630,705 600,710 545,755 555,710 580,650"],
  [3, "540,562 590,565 595,590 555,640 530,680 510,685 500,650 515,600"],
  [3, "590,565 625,580 580,650 550,720 525,790 513,790 510,685 530,680 565,640 598,585"],
  [3, "635,665 660,675 685,638 705,640 710,665 760,680 762,695 718,685 680,690 680,738 600,715 630,705"],
  [3, "600,715 680,738 670,795 580,770 560,770 545,765"],
  [3, "680,690 718,685 715,730 725,745 710,785 675,810 670,795 680,738"],
  [2, "513,795 525,790 545,765 560,775 580,770 670,795 675,810 678,852 630,908 580,895 535,865 512,830"],
  [1, "1290,465 1300,500 1318,515 1325,535 1340,545 1332,565 1342,575 1332,620 1300,570 1290,520 1278,500"],
  [1, "1390,455 1405,458 1425,488 1400,510 1410,555 1395,545 1390,500"],
  [1, "1198,582 1205,577 1218,577 1224,583 1210,589"],
  [2, "690,875 702,870 708,880 694,892"],
];

const MANHATTAN: Shape[] = [
  [1, "545,328 560,330 570,350 590,350 582,375 540,395 515,385 520,350"],
  [1, "588,352 600,348 620,355 612,370"],
  [4, "540,398 580,375 600,362 628,368 632,395 605,430 570,470 560,450"],
  [5, "515,390 540,405 552,440 545,470 540,520 515,545 490,530 465,515 435,520 460,500"],
  [1, "548,455 560,455 562,490 525,560 500,610 470,665 478,640 510,565 545,500"],
  [6, "435,525 465,515 515,545 495,600 470,665 415,640 432,570"],
  [5, "415,640 475,665 435,732 402,730 370,710 372,685 400,675"],
  [4, "370,722 400,730 435,732 405,803 380,785 352,757"],
  [4, "475,665 500,630 503,750 477,805 492,820 480,840 405,803 435,732"],
  [4, "350,757 405,803 370,845 362,897 292,865"],
  [4, "405,803 460,840 440,850 445,865 420,905 365,885 370,845"],
  [4, "503,750 510,830 530,880 530,920 500,942 460,940 455,915 420,905 445,865 440,850 480,840 492,820 477,805"],
  [6, "292,865 358,897 275,1048 215,1020"],
  [1, "365,885 415,908 290,1140 243,1120"],
  [5, "425,903 455,915 460,940 495,945 480,980 450,1010 385,977"],
  [5, "215,1020 275,1048 240,1120 172,1085"],
  [5, "385,977 415,995 328,1160 292,1140"],
  [6, "415,995 455,1015 458,1060 432,1098 380,1075"],
  [5, "378,1078 430,1098 400,1140 368,1185 328,1160"],
  [4, "172,1085 243,1120 185,1210 160,1195 155,1175 120,1155"],
  [2, "243,1120 302,1160 265,1230 235,1230 238,1270 225,1285 160,1268 187,1210"],
  [4, "302,1160 365,1185 295,1290 290,1255 265,1235"],
  [3, "120,1155 155,1175 160,1200 187,1210 160,1268 232,1295 195,1360 90,1305 85,1240"],
  [5, "240,1228 265,1232 290,1255 295,1300 290,1350 260,1345 225,1300 238,1280"],
  [4, "85,1300 195,1360 182,1440 120,1402 78,1400"],
  [5, "225,1300 260,1350 240,1380 198,1362"],
  [6, "198,1362 258,1397 228,1450 180,1435"],
  [5, "260,1350 280,1355 297,1412 258,1395 240,1380"],
  [3, "78,1400 120,1402 182,1438 165,1485 120,1525 70,1505"],
  [6, "180,1438 228,1452 210,1490 185,1540 145,1545 118,1522 165,1485"],
  [5, "258,1395 297,1412 290,1480 270,1530 185,1540 190,1500 228,1455"],
  [2, "50,1475 68,1477 70,1508 98,1525 120,1522 143,1548 125,1570 72,1603 50,1590 36,1565 45,1520"],
  [1, "550,878 575,875 612,910 600,950 560,1015 530,1025 495,1010 495,985 520,950 545,945 535,930 540,885"],
  [1, "735,910 760,900 800,925 845,950 848,980 800,988 740,965 730,935"],
];

const ROOSEVELT: Shape[] = [[5, "462,1085 470,1100 400,1190 365,1245 357,1240 385,1180 435,1110"]];

const QUEENS_WEST: Shape[] = [
  [2, "600,975 630,957 690,960 708,990 700,1010 676,1025 720,1010 740,1060 755,1125 735,1130 590,1105 560,1068"],
  [3, "485,1055 510,1045 560,1070 590,1105 580,1130 560,1140 510,1115 485,1090"],
  [1, "540,1055 582,1015 592,1022 560,1065"],
  [4, "485,1125 510,1115 560,1140 588,1105 670,1130 635,1225 555,1225 490,1180 500,1150"],
  [2, "485,1110 485,1125 500,1150 490,1180 555,1225 490,1250 412,1212 440,1160"],
  [1, "400,1215 490,1250 500,1235 560,1228 620,1222 635,1240 625,1290 640,1305 600,1320 590,1400 640,1410 620,1460 565,1485 545,1420 480,1390 460,1345 400,1325 350,1330 355,1300 375,1260"],
  [3, "665,1130 680,1170 700,1230 720,1290 690,1325 645,1345 630,1300 635,1225"],
  [1, "672,1128 720,1130 690,1175 680,1170"],
  [1, "750,1078 775,1075 772,1035 805,1030 805,1015 830,1020 850,990 858,995 845,1028 935,1088 920,1130 895,1130 870,1100 822,1090 755,1125"],
  [4, "822,1092 832,1195 858,1255 738,1270 700,1230 692,1190 720,1135"],
  [2, "822,1090 865,1100 895,1130 935,1188 832,1195 825,1140"],
  [4, "832,1195 938,1188 957,1250 867,1280 858,1255"],
  [4, "738,1270 858,1255 882,1360 760,1405 755,1365 815,1375 800,1340 808,1318 770,1310"],
  [4, "867,1280 948,1252 978,1330 882,1362"],
  [2, "645,1345 690,1325 720,1290 718,1270 738,1275 750,1300 800,1310 810,1325 795,1345 815,1372 755,1362 680,1355 655,1370"],
  [1, "600,1320 625,1303 648,1308 640,1365 660,1355 690,1362 650,1405 592,1400"],
  [3, "830,1390 915,1352 930,1385 912,1425 925,1440 915,1520 870,1440"],
  [3, "918,1352 978,1330 1005,1395 1072,1500 990,1545 928,1557 922,1440 905,1422 928,1385"],
  [2, "690,1362 755,1362 760,1425 700,1440 705,1490 660,1515 655,1490 640,1483 622,1508 565,1505 620,1475 632,1480 622,1445"],
  [1, "700,1440 760,1425 765,1405 830,1392 870,1440 910,1515 860,1530 860,1558 815,1560 800,1518 670,1515 705,1490"],
  [2, "350,1345 400,1325 460,1345 480,1390 510,1408 425,1475 420,1445 385,1440 355,1425"],
  [2, "355,1430 420,1445 425,1475 400,1505 420,1510 425,1560 310,1560 315,1500 330,1470"],
  [2, "510,1408 535,1410 560,1490 520,1500 515,1540 450,1555 400,1505 425,1475"],
];

const QUEENS_EAST: Shape[] = [
  [1, "165,180 195,165 190,140 205,128 240,122 270,112 285,130 268,145 275,208 355,208 335,255 278,300 240,308 225,295 215,270 215,205 175,200"],
  [1, "275,135 285,160 310,165 315,145 330,135 340,108 378,88 410,108 470,115 520,125 520,155 540,165 520,178 475,180 468,243 410,240 405,225 360,208 278,208 268,150"],
  [1, "475,180 520,178 540,155 590,150 585,120 610,113 630,125 648,165 622,170 665,225 620,235 515,262 495,247 468,243"],
  [1, "208,345 240,335 275,310 290,350 280,380 310,418 295,445 318,460 325,482 350,480 348,515 308,530 350,600 350,620 322,628 260,530 215,440 200,400 190,355"],
  [3, "350,208 365,208 345,275 375,350 388,375 378,400 405,430 350,400 310,418 280,370 285,340 275,300 330,260"],
  [2, "362,222 405,225 410,240 495,247 525,275 525,335 540,340 540,352 430,335 380,347 350,280"],
  [2, "380,350 430,335 517,355 520,400 510,420 475,420 475,408 450,405 415,430 378,400 388,375"],
  [1, "415,430 450,408 475,408 475,422 520,425 520,445 500,457 412,452"],
  [2, "310,418 350,400 410,430 412,452 505,457 508,480 350,478 345,490 320,482 318,455 295,445"],
  [2, "350,478 405,480 408,545 430,550 445,545 462,570 460,590 440,600 445,620 355,612 345,560 308,530 348,515"],
  [2, "408,480 515,480 525,530 540,570 540,600 445,618 440,600 462,590 460,565 445,545 430,550 408,545"],
  [1, "517,262 620,235 665,225 700,275 742,308 715,318 722,350 698,350 722,410 622,447 570,325"],
  [1, "520,275 568,325 622,447 515,480 508,475 520,400 520,355 540,350 525,330"],
  [1, "515,480 622,447 652,520 540,557 525,530"],
  [1, "622,447 722,410 698,350 720,345 715,318 742,308 738,270 745,215 760,203 780,225 830,245 965,345 1028,388 1038,470 997,545 875,577 865,548 780,523 732,555 680,560 615,575 615,535 652,520"],
  [1, "540,557 615,535 622,560 615,578 660,558 732,555 750,592 720,600 645,625 530,650 540,600"],
  [2, "780,523 865,548 875,577 890,650 892,702 840,700 790,705 780,745 765,735 757,690 725,600 750,592 735,555"],
  [2, "645,625 725,600 757,690 675,705 668,665 650,655"],
  [2, "350,620 445,620 540,600 530,650 480,660 475,685 430,685 420,705 400,705"],
  [2, "400,705 425,705 430,685 475,685 485,660 530,655 645,625 660,660 625,685 635,715 600,685 540,705 455,775 430,770"],
  [2, "280,655 350,622 400,705 320,710 285,690"],
  [2, "430,770 455,775 540,705 600,687 632,720 600,765 610,785 520,805 515,795 490,805 490,820 460,825"],
  [1, "625,685 665,665 675,705 757,690 770,735 798,745 735,870 690,883 640,850 643,835 585,785 610,780 600,765 635,720"],
  [1, "785,720 790,705 892,702 897,825 780,790 800,745 780,745"],
  [2, "460,825 490,820 515,795 520,805 585,785 643,835 575,890 555,895 550,930 483,932 480,890"],
  [2, "555,895 575,890 630,848 690,883 712,880 728,890 728,930 550,930"],
  [1, "735,870 780,790 890,825 820,932 728,930 728,890 712,880"],
  [2, "220,730 285,697 320,710 400,705 432,770 350,795 345,785 335,800 288,820 265,825"],
  [2, "270,840 290,820 335,800 430,772 480,880 482,932 430,955 315,945"],
  [3, "115,755 200,738 200,722 222,732 262,828 210,835 200,845 155,852 130,830"],
  [2, "150,852 262,828 272,840 305,930 152,882"],
  [1, "192,680 240,668 285,672 285,698 225,730 195,705"],
  [1, "152,882 305,932 345,1040 325,1045 300,1045 295,1062 220,1072 205,1040 215,1025 175,1025 160,1000 180,940 175,900"],
  [1, "305,932 315,945 430,955 480,937 600,950 690,1005 785,1080 775,1130 675,1170 655,1220 640,1195 610,1180 580,1213 545,1210 580,1170 575,1150 540,1130 480,1100 385,1055 360,1035 345,1040"],
  [1, "480,937 620,925 825,935 890,825 898,855 885,900 890,975 904,1018 840,1035 815,1050 812,1120 785,1110 782,1080 738,1045 690,1005 600,955"],
  [1, "125,1520 210,1465 280,1460 340,1438 385,1428 440,1395 470,1362 535,1350 560,1330 545,1370 590,1300 625,1290 630,1320 600,1345 600,1362 650,1360 695,1350 690,1403 600,1415 400,1457 260,1510 150,1557"],
  [2, "640,1265 680,1262 685,1278 790,1275 830,1330 832,1382 790,1388 755,1405 690,1402 700,1350 685,1352 675,1368 650,1350 660,1290 640,1278"],
];

const BAY_ISLANDS: Shape[] = [
  [1, "52,1240 56,1225 90,1195 130,1178 128,1195 135,1212 125,1228 90,1248 60,1250"],
  [1, "170,1160 172,1148 200,1140 202,1158"],
  [1, "216,1145 222,1125 232,1110 244,1118 240,1130 228,1147"],
  [1, "308,1105 330,1125 355,1125 360,1100 365,1135 375,1165 395,1190 390,1210 403,1215 392,1235 400,1255 370,1258 365,1268 340,1255 300,1258 312,1210 305,1200 320,1185 318,1140"],
  [1, "362,1275 375,1258 400,1258 408,1280 395,1300 395,1340 385,1370 375,1380 300,1385 310,1372 345,1365 362,1355 365,1320 378,1290"],
  [1, "455,1215 470,1195 498,1188 492,1220 482,1235 475,1255 460,1235"],
  [1, "493,1272 500,1250 520,1210 550,1208 572,1218 575,1240 595,1260 570,1275 545,1278 535,1292"],
  [1, "240,1265 250,1280 262,1272 290,1270 275,1295 262,1320 240,1318 225,1310 243,1295"],
  [1, "143,1352 155,1337 175,1334 195,1342 210,1358 190,1373 155,1372"],
  [1, "103,1445 105,1420 115,1408 130,1403 145,1410 154,1425 150,1445 135,1458 115,1465"],
  [1, "253,1390 265,1370 290,1380 320,1395 312,1415 300,1418 265,1400"],
  [1, "298,1312 303,1298 315,1292 328,1308 318,1318"],
  [1, "334,1316 340,1292 348,1297 356,1318"],
  [1, "408,1335 425,1325 437,1340 432,1358 420,1350"],
  [1, "470,1315 475,1300 495,1293 518,1303 515,1320 495,1322"],
  [1, "182,1290 190,1290 215,1275 217,1285 200,1302"],
  [1, "90,1285 98,1285 107,1300 102,1315"],
  [1, "178,1218 190,1222 205,1207 222,1213 213,1224 185,1225"],
  [1, "660,1222 672,1222 672,1252 652,1250"],
];

const BROOKLYN: Shape[] = [
  [2, "310,140 400,128 400,180 388,212 390,240 410,285 395,318 360,310 322,282 330,245 345,240 340,160"],
  [4, "318,148 338,160 342,210 348,240 285,228"],
  [1, "400,128 430,165 470,150 495,180 485,198 460,185 400,182"],
  [2, "285,228 330,245 322,282 358,310 340,340 318,345 300,380 270,395 235,400 215,372 195,370 185,320 220,290 225,265"],
  [3, "400,185 462,185 460,295 410,285 388,240"],
  [3, "462,200 500,185 512,210 530,212 512,235 510,262 540,265 545,310 505,312 460,295"],
  [4, "467,120 535,115 580,140 570,158 550,150 520,180 497,178"],
  [3, "505,185 530,155 552,150 570,158 610,160 600,190 618,312 548,310 540,265 512,262 512,238 535,235 530,210 510,210"],
  [3, "600,90 650,72 660,115 665,145 822,245 810,290 840,335 625,178 605,160"],
  [4, "658,115 720,103 775,145 782,170 815,200 812,215 830,232 820,250 665,145"],
  [3, "605,180 628,178 745,262 750,322 720,322 718,290 650,292 648,312 618,312"],
  [3, "745,262 838,335 720,402 720,322 750,322"],
  [3, "505,312 648,315 650,292 718,290 718,402 685,425 640,415 635,400 578,392 500,375 510,350 495,345"],
  [3, "435,290 505,312 495,345 508,350 500,375 462,362 460,342 425,325"],
  [3, "358,310 395,318 410,285 435,290 425,325 462,345 462,365 408,445 385,465 360,462 350,445 310,425 315,405 300,380 318,345 340,340"],
  [4, "500,377 578,392 640,400 640,415 690,430 600,437 500,430"],
  [4, "498,432 600,428 610,437 680,432 690,455 688,480 583,490 568,490 565,525 520,523 515,490 498,492"],
  [1, "462,362 500,375 498,490 480,515 482,530 450,540 430,460 408,445"],
  [3, "385,465 408,445 430,460 448,560 395,545 390,490 360,468"],
  [1, "318,460 368,468 390,490 397,548 352,570 278,512"],
  [2, "300,380 315,405 312,425 350,445 360,465 318,460 278,512 205,605 172,600 155,612 115,578 150,550 150,520 200,470 240,430 290,415"],
  [4, "278,512 352,570 315,602 298,590 252,640 235,670 200,645 212,625 203,605"],
  [3, "352,572 397,590 415,650 420,660 420,792 310,700 280,690 252,645 298,590 315,602"],
  [4, "355,572 405,550 450,560 465,625 440,635 420,660 412,620 400,590"],
  [4, "448,540 500,497 515,495 520,525 525,590 545,612 590,612 595,680 510,690 505,675 450,685 445,698 420,700 420,665 465,625"],
  [4, "520,523 565,525 568,490 583,490 575,610 545,612 522,590"],
  [3, "583,490 665,485 680,605 695,602 690,635 635,640 632,658 595,660 590,612 578,610"],
  [1, "602,535 625,535 630,542 660,540 660,565 605,567"],
  [3, "665,485 690,480 690,455 680,430 700,420 735,455 790,515 735,570 733,595 700,590 695,605 680,603"],
  [3, "700,420 822,345 845,475 790,500 790,515 762,475 735,455"],
  [2, "822,345 840,335 845,350 875,352 895,380 900,430 930,415 935,430 845,475"],
  [3, "838,328 865,290 900,288 1012,235 1025,300 1052,350 985,318 940,310 900,325 850,330"],
  [1, "840,335 900,325 940,310 985,318 1055,355 1075,375 1082,430 1055,462 1070,510 1078,570 1050,580 1020,600 990,550 950,500 895,520 870,495 820,552 790,520 800,500 845,475 935,430 930,415 900,430 895,380 860,350"],
  [2, "735,570 790,525 820,552 870,495 895,530 890,545 965,630 932,665 935,685 910,690 870,725 745,660 740,600"],
  [2, "890,520 940,500 980,565 960,605 900,545"],
  [1, "955,500 975,530 985,570 1010,615 985,628 965,605 985,565"],
  [2, "595,662 632,658 640,640 690,635 700,590 733,595 745,780 700,795 665,765 640,745 600,770 585,690"],
  [2, "420,705 450,700 465,730 485,735 495,815 440,825 430,790 415,770 425,740"],
  [3, "450,685 505,675 512,690 585,685 595,780 570,795 565,812 505,818 495,800 485,735 465,730 450,705"],
  [3, "440,825 520,818 530,975 510,980 508,958 450,955"],
  [2, "520,818 570,812 572,795 597,780 600,820 625,825 652,855 652,882 605,890 605,905 530,915"],
  [1, "597,775 640,745 650,765 665,765 690,790 745,785 742,830 720,845 690,850 650,830 625,825 600,820"],
  [2, "530,915 605,905 608,890 655,882 735,960 700,985 665,935 670,1010 600,1015 510,1015 508,980 530,978"],
  [2, "205,655 235,670 252,645 280,690 305,700 300,720 235,790 172,760 150,820 142,815 190,720"],
  [2, "100,575 155,612 170,600 205,630 205,655 185,720 142,815 160,825 185,865 125,855 100,832 75,800 62,750 60,700 68,650 85,600"],
  [1, "172,760 225,795 200,840 185,865 160,830"],
  [3, "308,700 405,780 355,845 360,855 300,935 290,925 315,890 268,852 285,828 235,795 300,720"],
  [2, "230,795 285,828 268,852 315,890 285,935 260,905 230,885 190,865"],
  [3, "405,780 430,795 445,910 400,918 398,935 365,935 300,970 290,940 315,915 360,855 355,845"],
  [2, "365,935 398,935 400,918 445,912 450,955 480,960 472,1005 430,1010 360,1015 350,1005 330,1018 295,1010 300,975"],
  [3, "480,955 508,958 512,1015 545,1020 550,1075 465,1070 470,1010"],
  [3, "392,1042 430,1038 430,1012 470,1008 465,1070 440,1065 395,1065"],
  [2, "220,1045 232,1027 255,1022 330,1030 360,1042 370,1018 430,1012 430,1040 395,1042 393,1065 460,1072 515,1080 400,1098 280,1105 265,1088 230,1078"],
  [2, "548,1020 580,1028 660,1028 670,1062 550,1075"],
  [1, "745,665 865,735 865,780 880,795 895,805 885,845 840,848 830,800 795,770 835,830 820,850 780,862 750,835 758,790 745,780"],
  [1, "625,840 650,828 700,848 745,840 770,872 850,865 930,855 967,1000 950,1040 868,1057 850,985 780,985 775,930 740,885 715,890 670,868 760,965 740,985"],
  [1, "720,900 745,895 770,930 765,950"],
  [1, "680,1003 775,990 778,1020 740,1015"],
  [2, "690,970 710,955 740,985 700,995"],
  [1, "815,255 850,222 880,205 915,170 1000,150 1095,145 1100,182 1010,210 980,215 900,288 865,285 850,315 825,300"],
  [1, "900,288 960,235 1010,207 1012,235 905,290"],
  [2, "665,70 715,70 950,78 962,118 900,130 870,175 850,212 830,232 812,215 815,200 782,170 775,145 720,103 665,100"],
  [2, "850,215 870,175 900,128 965,118 1010,115 1010,100 1060,72 1065,60 1080,118 1092,118 1100,155 1085,145 970,150 915,170 905,195 875,205"],
  [1, "145,270 158,250 170,230 185,220 205,216 220,222 225,240 205,265 165,288"],
  [1, "52,182 68,163 82,175 65,193"],
  [1, "30,240 42,233 55,243 44,250"],
  [1, "618,1305 620,1230 635,1202 660,1195 700,1168 740,1162 775,1142 800,1158 830,1160 875,1122 930,1122 970,1115 1045,1072 1048,1127 940,1172 865,1200 838,1203 740,1245"],
];

const STATEN: Shape[] = [
  [1, "385,190 390,175 435,128 450,128 455,115 475,118 478,132 495,128 502,115 518,138 560,142 575,155 615,170 640,160 675,152 725,140 760,150 800,142 855,112 930,115 990,88 1030,92 1068,118 1070,140 1060,145 1060,250 1070,285 1110,315 1145,380 1163,400 1170,442 1100,520 1070,570 990,650 945,710 930,712 910,738 883,775 870,772 838,815 790,838 740,925 710,950 693,945 688,908 720,907 740,890 680,895 640,912 580,962 525,993 512,995 485,1020 460,1013 440,1022 385,1090 370,1085 355,1068 310,1080 260,1138 235,1142 180,1150 140,1175 97,1190 70,1165 52,1130 53,1100 70,1085 75,1055 95,1042 115,1030 137,1018 122,1005 120,975 127,935 120,905 97,848 115,820 130,820 160,790 160,780 175,778 200,757 265,762 290,752 300,700 325,600 335,515 360,490 373,455 365,420 345,390 347,345 356,320 353,240 360,208"],
  [0, "710,826 735,824 755,840 757,865 745,880 725,905 690,908 680,892 680,860"],
  [1, "573,127 592,125 590,140 578,140"],
  [1, "1158,590 1165,583 1169,600 1160,606"],
];

const STATEN_LINES =
  "M385,190L465,240L500,280L545,292L615,350L660,380L740,380L790,375L830,358L865,367L940,365L1000,392L1055,398L1108,422L1103,410L1147,385 M675,152L662,170L652,228L660,250L650,280L625,315L615,350 M762,152L755,170L750,205L735,228L705,240L712,260L700,265L692,322L658,318L650,365L635,372 M745,210L738,250L795,240L835,272L890,315L920,360 M835,272L820,220L815,167L830,170L920,150L930,158L945,160L958,182L990,182L1027,167L1060,168 M995,192L955,262L893,322 M990,200L1022,235L1000,245L990,300L978,342L1020,305L1065,280L1068,298L1050,320L1015,390 M795,375L817,372L828,400L826,425L802,430L775,453L740,450L722,475L698,518L650,523L575,475L570,490L537,522L525,600L527,720 M960,378L952,395L952,440L965,435L1005,428L1013,440L990,465L1012,497L1045,475L1073,467L1103,520 M952,440L945,460L907,490L905,515L882,545L790,620L760,612L735,630L668,643L668,658 M882,545L918,577L913,590L995,645 M790,620L792,645L775,667L820,698L835,685L908,737 M290,752L325,745L345,757L355,757L392,713L455,690L515,718L555,727L597,710L645,652L735,697L720,735L702,750L725,785L760,750L818,805L835,813 M725,785L700,810L712,826 M527,720L540,810L550,845L590,895L612,913L602,935L572,950L580,962 M515,718L490,760L465,820L420,885L395,903 M342,757L403,932L345,972L275,987L260,910L262,850L245,798L265,762 M275,987L283,1007L260,1013L232,1028L213,1030L230,1105L237,1142 M1060,222L1085,232 M585,150l3,14M600,155l4,14M620,158l-2,14M630,155l2,12M765,142l3,12M785,140l2,10M800,136l4,10M1058,120l14,4M1060,130l14,8M250,765l30,-8M290,752l38,-12";

const HARLEM_RIVER = "M547,322L565,322L578,345L615,345L634,362L637,390L615,435L572,490L545,545L520,590L503,640L504,700L506,800L512,830L536,870";
const NEWTOWN_CREEK = "M350,1332L400,1325L440,1340L462,1360L480,1390L530,1405L550,1440L558,1490";

const NORTH_LINES =
  "M160,1078l12,8M154,1086l12,8M150,1095l12,8M144,1102l14,8M140,1108l14,8M136,1116l14,7M134,1124l14,6M130,1132l14,6M128,1140l15,5M124,1148l12,6M120,1158l12,4M110,1175l10,6M74,1240h14M72,1250h14M74,1258h14M72,1266h16M74,1274h14M72,1282h15M76,1290h12M74,1300h14M70,1315h14M62,1390v12M62,1402h16M58,1418h20M62,1440h12M60,1465h12M200,1025l-8,6M190,1045l-8,4M215,990l10,6M362,720l8,4M475,1110L440,1165L385,1255 M495,1112L455,1170L400,1215 M1320,305l8,2M1332,330l3,8M1330,340l6,6M1375,346l3,4M1386,368h12M1402,411h3M1416,401h3M1322,430l8,6M1308,455l4,-5l10,2l-4,8l-8,0zM1328,487l3,2M1340,487l4,1M1375,440l4,6M1383,445l3,3M1297,630l5,5M1278,502l10,6M1280,508l10,6M1335,560l8,14M1338,540l4,10M475,1030l6,-8M699,912l5,5M858,990l8,-14M336,1272l2,2M1150,545l10,12l-8,10 M738,1048l8,20l-8,10 M470,1298L465,1320L440,1335M436,1345v10M345,1385h8M350,1410h8M325,1470h12M320,1480h12M330,1465v12";

const EAST_LINES =
  "M722,345L760,355L780,385L795,425L785,445L748,455L760,467L815,478 M965,345L930,350L885,405L915,405L930,415L955,470L980,545 M885,405L850,455L780,520L735,552L690,520L685,505L693,485L668,435 M742,308L790,345L820,370L812,390L845,425L850,452 M755,300L768,298L780,325L790,360 M762,320L780,322 M778,218L792,230 M782,222L795,228 M768,810L830,830L845,828L852,812 M690,1005L705,985L798,1018L802,995L775,985L790,955L825,935 M365,1045L360,1000L368,975L390,963L425,970 M355,1040L355,990L375,965L400,960L425,968 M272,960L292,1062 M280,962L298,1045 M312,985l10,4l-8,8l12,2l-10,10M325,985L318,1045 M502,1152L540,1135 M738,1045L775,1065L785,1105 M812,1120L820,1125 M628,1228L645,1205 M300,1210l20,-8M302,1216l20,-4M305,1222l14,-2M140,1200l6,2M172,1192h4M225,1158v3M225,1168v3M240,1198l10,4M262,1182l8,2M292,1150l5,1M403,1162l8,2l-2,10l-6,-4zM415,1188l8,2l-2,14l-6,-4zM420,1222h3M115,1300l5,2M116,1328l5,2M102,1335v22M107,1350v18M340,1408l6,-6M450,1385L475,1390M230,1310l22,10M232,1316l16,6M475,1310L510,1308M480,1304l20,10M385,1428L405,1457M145,985l12,-4M148,990l14,2M160,995L175,1020M150,998L168,1030M155,325l20,8M160,330l15,-6M205,345l10,-6M205,215h10M200,210l12,4";

const SOUTH_LINES =
  "M830,1160L838,1203 M1025,1090L1048,1127 M830,1160L932,1125 M1045,1068L1025,1090 M432,108L445,160 M445,105L452,160 M418,150L455,165 M410,130L440,160 M425,150L450,140M460,130L440,165 M290,170l12,6M288,176l12,6M285,182l14,6M282,189l14,5M280,195l12,4M275,205l12,5M270,210l12,5M266,217l12,5M264,224l12,5M260,230l12,5M256,237l12,5M252,243l14,5M248,250l14,5M246,257l12,5 M186,375L192,415L215,425L238,405L232,375L205,350 M196,378L202,410L215,416L228,402M300,380L295,400L285,410L275,400L260,390L262,375 M290,425L275,430L278,448L262,430L268,452L252,435L256,458L240,442L242,460L225,450L230,468L212,455L215,472L200,465L205,482 M195,480l12,8M185,485l14,6M180,492l14,8M165,505l20,8M155,515l18,8M150,522l18,6M160,508l18,6M150,545l-15,0l8,12l-12,2l6,10l-14,4 M745,660L865,725 M750,672L855,728 M892,540L955,615 M898,540L962,610M1042,470L1060,490L1080,515L1100,520L1112,525 M1050,462L1068,488L1080,510M1172,440L1188,560 M1180,442L1196,540M1210,475l16,-4M1210,485l18,6M1214,495l10,6M668,868L690,885L715,880L745,890L772,925L775,985 M662,875L690,895L712,888L735,895M665,935L675,935L685,980L710,993L775,985 M745,795L740,825L765,858L800,870 M752,790L748,825L770,852M795,770L830,815L835,840 M550,1018L640,1025L665,1018 M295,970l25,5M292,978l24,-6M292,980l20,4M298,985l15,-18M340,1012l-6,10l12,12l18,8 M380,1102v4M415,1098v4M430,1095v5M445,1092v5M495,1075v3 M490,0l-10,20l-5,30M10,1130l8,5 M210,10h10M208,22h10 M185,315h10M195,130v14M160,283v8M840,215l30,5M855,212l10,12M870,282l10,-8l10,10";

const ONE = 1 / 3;
const LAND_BASE = [
  ...place(BASE_NORTH, 1250, 400, ONE, ONE),
  ...place(BASE_EAST, 1500, 660, ONE, 0.38265),
  ...place(BASE_SOUTH, 1200, 880, ONE, ONE),
];
const LAND = [
  ...weld(place(BRONX, 1250, 400, ONE, ONE), 2.6),
  ...weld(place(MANHATTAN, 1250, 400, ONE, ONE), 2.6),
  ...place(ROOSEVELT, 1250, 400, ONE, ONE),
  ...weld(
    [
      ...place(QUEENS_EAST, 1500, 660, ONE, 0.38265),
      ...place(BROOKLYN, 1200, 880, ONE, ONE),
      ...place(QUEENS_WEST, 1250, 400, ONE, ONE),
    ],
    2.8,
  ),
  ...place(BAY_ISLANDS, 1500, 660, ONE, 0.38265),
  ...place(STATEN, 810, 1030, ONE, ONE),
];

const Areas = ({ list }: { list: Area[] }) => (
  <>
    {list.map(({ c, pts }, i) => (
      <polygon key={i} points={pts.map(([x, y]) => `${x.toFixed(1)},${y.toFixed(1)}`).join(" ")} fill={FILL[c]} />
    ))}
  </>
);

const Lines = ({ d, w, color }: { d: string; w?: number; color?: string }) => (
  <path d={d} fill="none" vectorEffect="non-scaling-stroke" strokeWidth={w} stroke={color} />
);

function MapCanvas() {
  return (
    <main className="flex min-w-0 flex-1 flex-col border-l border-t border-[#4f4f4f] bg-white">
      <svg viewBox="660 342 1353 1159" role="img" aria-label="Population density by neighbourhood" className="block h-auto w-full">
        <Areas list={LAND_BASE} />
        <g stroke="#232323" strokeWidth="1.500" strokeLinejoin="round">
          <Areas list={LAND} />
          <g transform="translate(1250 400) scale(.33333)">
            <Lines d={HARLEM_RIVER} w={5} />
            <Lines d={HARLEM_RIVER} w={2.4} color="#ffffff" />
            <Lines d={NEWTOWN_CREEK} w={3.6} />
            <Lines d={NEWTOWN_CREEK} w={1.2} color="#ffffff" />
            <Lines d={NORTH_LINES} />
          </g>
          <g transform="translate(1500 660) scale(.33333 .38265)"><Lines d={EAST_LINES} /></g>
          <g transform="translate(1200 880) scale(.33333)"><Lines d={SOUTH_LINES} /></g>
          <g transform="translate(810 1030) scale(.33333)"><Lines d={STATEN_LINES} /></g>
        </g>
      </svg>
    </main>
  );
}

/* ---------- status bar ---------- */

function Spin({ id, value }: { id: string; value: string }) {
  return (
    <span className="flex h-12 w-[184px] shrink-0 items-center rounded-[5px] border-2 border-[#262626] bg-linear-to-b from-[#525252] to-[#3c3c3c] pr-[10px] pl-2">
      <input id={id} defaultValue={value} className="w-full min-w-0 bg-transparent text-[23px] text-[#b1b1b1] outline-none" />
      <span className="flex flex-col gap-4">
        <button type="button" aria-label="Increase" className="h-2 w-2">
          <svg viewBox="0 0 8 8" className="h-2 w-2" aria-hidden="true"><path d="M0 8h8L4 0z" fill="#c4c4c4" /></svg>
        </button>
        <button type="button" aria-label="Decrease" className="h-2 w-2">
          <svg viewBox="0 0 8 8" className="h-2 w-2" aria-hidden="true"><path d="M0 0h8L4 8z" fill="#c4c4c4" /></svg>
        </button>
      </span>
    </span>
  );
}

function StatusBar() {
  return (
    <footer className="flex h-[60px] items-center pt-1 pl-2 text-[23px] whitespace-nowrap">
      <label className="flex h-12 w-[427px] shrink-0 items-center rounded-[5px] border-2 border-[#383838] bg-[#b1b1b1] pl-4">
        <svg viewBox="0 0 26 26" className="h-[26px] w-[26px]" fill="none" aria-hidden="true">
          <circle cx="11" cy="11" r="8.500" stroke="#979797" strokeWidth="2.500" /><path d="M17 17l7 7" stroke="#979797" strokeWidth="3" />
        </svg>
        <input type="search" placeholder="Type to locate (⌘K)" aria-label="Locate" className="ml-5 w-full min-w-0 bg-transparent text-[25px] outline-none placeholder:text-[#6c6c6c]" />
      </label>
      <span className="flex-1" />
      <label htmlFor="coord" className="mr-[5px] w-[56px] overflow-hidden">ordina</label>
      <input id="coord" defaultValue="1086736,149269" className="h-[44px] w-[214px] shrink-0 rounded-[5px] border-2 border-[#383838] bg-[#b1b1b1] text-center outline-none" />
      <button type="button" aria-label="Toggle extents" className="ml-2 h-8 w-8">
        <svg viewBox="0 0 32 32" className="h-8 w-8" aria-hidden="true">
          <rect x="4" y="1" width="10" height="17" rx="5" transform="rotate(-15 9 9)" fill="#fff" stroke="#111" strokeWidth="2.500" /><path d="M8 3l2 12" stroke="#111" strokeWidth="2" />
          <ellipse cx="17" cy="23" rx="8" ry="8" fill="#fff" stroke="#111" strokeWidth="2.500" /><path d="M9 18c3-4 11-4 15 0" stroke="#111" strokeWidth="4" fill="none" /><circle cx="18" cy="24" r="2.500" fill="#fff" stroke="#111" strokeWidth="2" /><path d="M20 7l3-3M24 9l4-3M2 20l3 2" stroke="#111" strokeWidth="2" />
        </svg>
      </button>
      <label htmlFor="scale" className="ml-7 mr-[6px] flex w-[9px] justify-center overflow-hidden"><span className="pr-2">ca</span></label>
      <span className="grid h-12 w-[204px] shrink-0 items-center">
        <select id="scale" className="col-start-1 row-start-1 h-12 w-full appearance-none rounded-[5px] border-2 border-[#262626] bg-linear-to-b from-[#525252] to-[#3c3c3c] pl-[10px] text-[#b1b1b1]">
          <option>1:523102</option>
        </select>
        <svg viewBox="0 0 8 8" className="pointer-events-none col-start-1 row-start-1 mr-[10px] h-2 w-2 justify-self-end" aria-hidden="true"><path d="M0 0h8L4 8z" fill="#c4c4c4" /></svg>
      </span>
      <button type="button" aria-label="Lock scale" className="ml-[22px] h-7 w-[26px]">
        <svg viewBox="0 0 26 28" className="h-7 w-[26px]" fill="none" aria-hidden="true">
          <path d="M5 15V9a8 8 0 0 1 16 0v6" stroke="#d8d8d0" strokeWidth="3" /><rect x="2" y="13" width="22" height="15" rx="2" fill="#606060" />
        </svg>
      </button>
      <label htmlFor="magnifier" className="mr-[6px] ml-[20px] w-[36px] overflow-hidden">gnifi</label>
      <Spin id="magnifier" value="100%" />
      <label htmlFor="rotation" className="mr-[20px] ml-[18px] w-[24px] overflow-hidden"><span className="-ml-1">tat</span></label>
      <Spin id="rotation" value="0.0 °" />
      <span className="ml-[14px]"><Check id="render" light /></span>
      <label htmlFor="render" className="ml-[14px]">Render</label>
      <button type="button" className="ml-[26px] flex items-center gap-[5px]">
        <svg viewBox="0 0 28 28" className="h-7 w-7" fill="none" aria-hidden="true">
          <path d="M14 2C3 5 3 23 14 26M14 2c11 3 11 21 0 24M14 1v25M6 6c5 3 11 3 16 0M1 12c8 3 18 3 26 0M5 20c6 2 12 2 18 0M14 2C7 8 7 20 14 26M14 2c7 6 7 18 0 24" stroke="#ddd" strokeWidth="2" />
        </svg>
        EPSG:2263
      </button>
      <button type="button" aria-label="Messages" className="mr-[28px] ml-[41px] h-8 w-[34px]">
        <svg viewBox="0 0 34 32" className="h-8 w-[34px]" aria-hidden="true">
          <path d="M17 0c22 0 21 26 10 25l3 7-9-5C-6 29-6 0 17 0z" fill="#646464" /><circle cx="9" cy="14" r="3" fill="#fff" /><circle cx="17" cy="14" r="3" fill="#fff" /><circle cx="25" cy="14" r="3" fill="#fff" />
        </svg>
      </button>
    </footer>
  );
}

function Callout() {
  return (
    <svg viewBox="0 0 470 380" className="pointer-events-none absolute top-0 left-0 h-[380px] w-[470px] drop-shadow-[1px_3px_2px_rgba(0,0,0,0.4)]" aria-hidden="true">
      <ellipse cx="182" cy="147" rx="45" ry="41" fill="none" stroke="#ff2d6f" strokeWidth="6" />
      <path d="M215 186l66 12-14 10 183 153q1 6-6 5L251 230l-7 16z" fill="#ff2d6f" />
    </svg>
  );
}

export default function App() {
  return (
    <div className="relative flex min-h-screen flex-col bg-linear-to-r from-[#150000] to-[#3a0600] pr-1 pb-[5px] font-[Inter,sans-serif] text-[#101010]">
      <MenuBar />
      <div className="flex flex-1 flex-col rounded-t-[20px] rounded-b-[20px] border border-[#8c8c8c] bg-[#727272]">
        <TitleBar />
        <Toolbars />
        <div className="flex flex-1">
          <aside className="mr-[13px] flex w-[645px] shrink-0 flex-col">
            <Browser />
            <Layers />
          </aside>
          <MapCanvas />
        </div>
        <StatusBar />
      </div>
      <Callout />
    </div>
  );
}
